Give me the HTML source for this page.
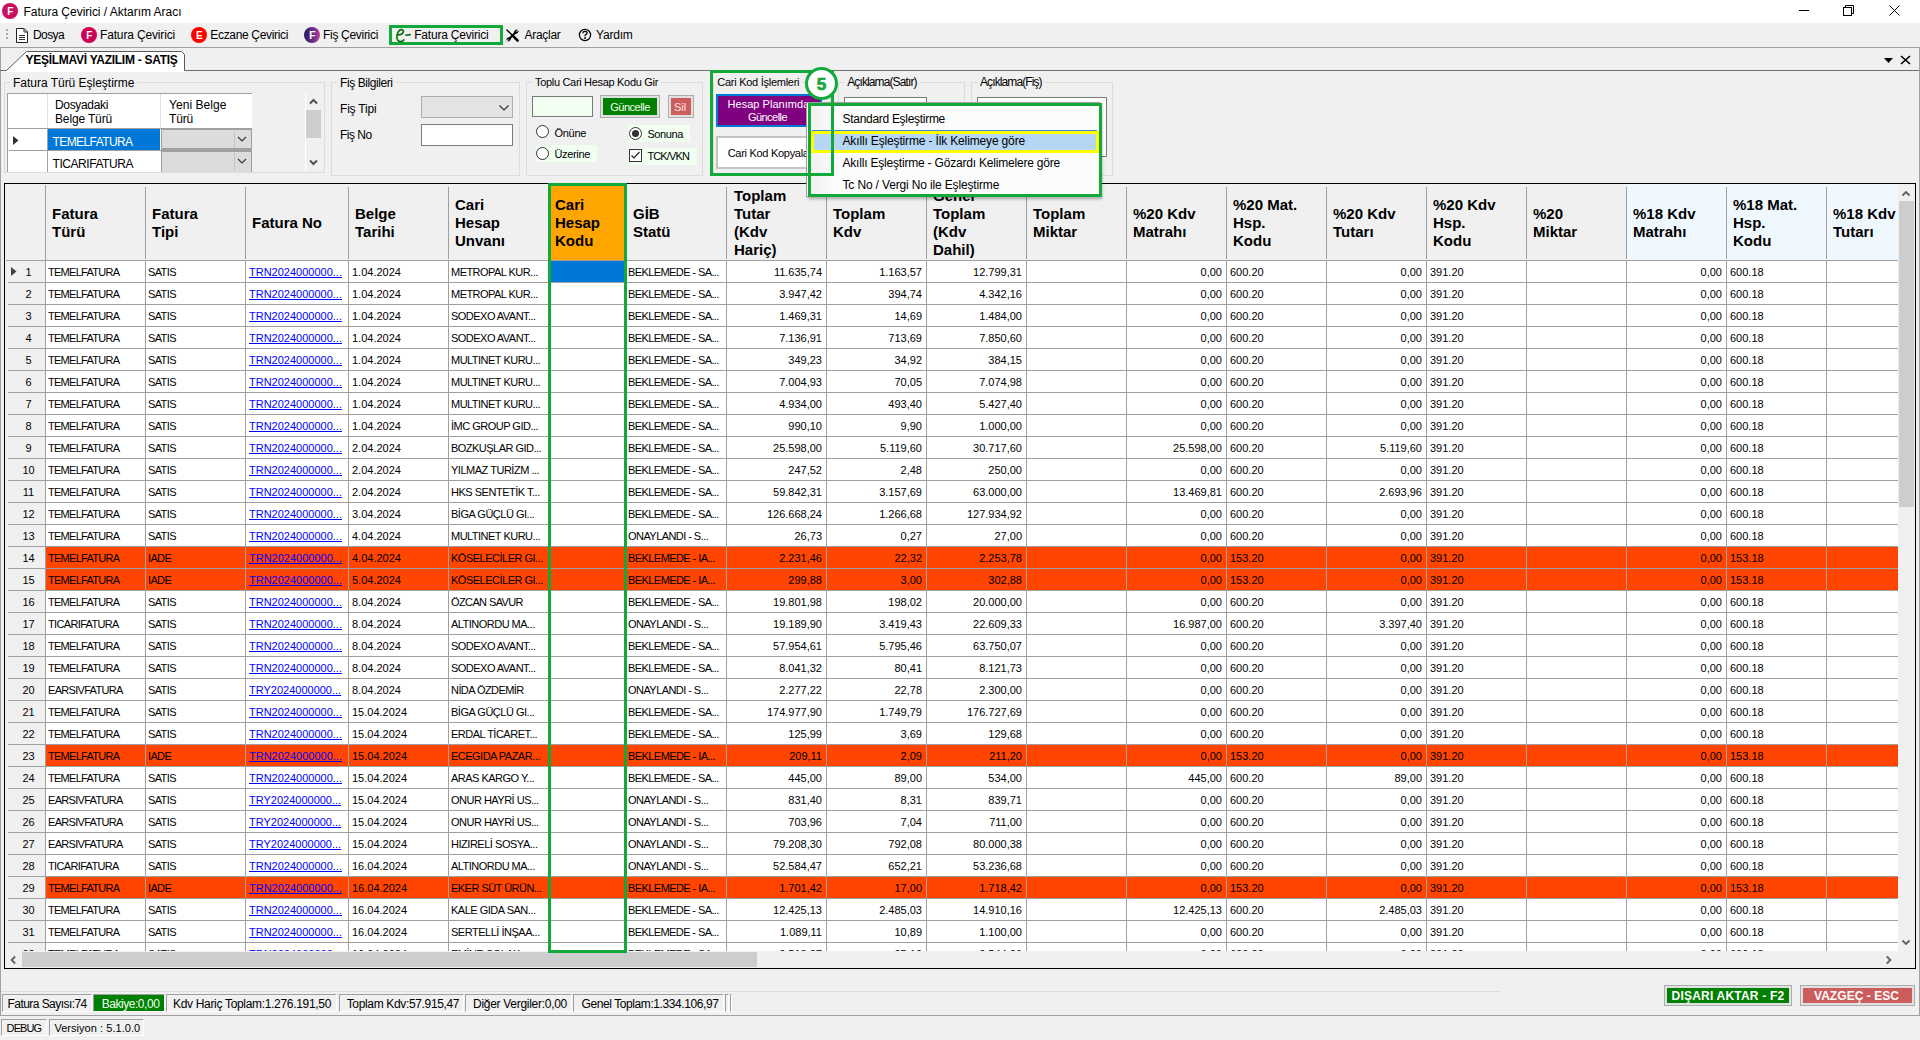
<!DOCTYPE html>
<html><head><meta charset="utf-8"><style>
html,body{margin:0;padding:0;}
body{width:1920px;height:1040px;position:relative;overflow:hidden;background:#f0f0f0;font-family:"Liberation Sans", sans-serif;}
.t{position:absolute;white-space:pre;font-family:"Liberation Sans", sans-serif;}
</style></head><body>
<div style="position:absolute;left:0px;top:0px;width:1920px;height:23px;background:#fff"></div>
<div style="position:absolute;left:2px;top:3px;width:16px;height:16px;border-radius:50%;box-sizing:border-box;background:#cc0f5f"></div>
<span class="t" style="left:7.15px;top:6.53px;font-size:10px;line-height:10px;color:#fff;font-weight:700;">F</span>
<span class="t" style="left:23.50px;top:5.84px;font-size:12px;line-height:12px;color:#000;letter-spacing:-0.023px;">Fatura Çevirici / Aktarım Aracı</span>
<div style="position:absolute;left:1799px;top:10px;width:10px;height:1px;background:#000"></div>
<svg style="position:absolute;left:1843px;top:5px;" width="12" height="12" viewBox="0 0 12 12"><rect x="0.5" y="2.5" width="8" height="8" fill="none" stroke="#000"/><path d="M2.5 2.5V0.5H10.5V8.5H8.5" fill="none" stroke="#000"/></svg>
<svg style="position:absolute;left:1889px;top:5px;" width="12" height="12" viewBox="0 0 12 12"><path d="M0.5 0.5L10.5 10.5M10.5 0.5L0.5 10.5" stroke="#000" stroke-width="1"/></svg>
<div style="position:absolute;left:0px;top:23px;width:1920px;height:24px;background:#f0f0f0"></div>
<div style="position:absolute;left:6px;top:29px;width:2px;height:2px;background:#a9a9a9"></div>
<div style="position:absolute;left:6px;top:33px;width:2px;height:2px;background:#a9a9a9"></div>
<div style="position:absolute;left:6px;top:37px;width:2px;height:2px;background:#a9a9a9"></div>
<svg style="position:absolute;left:15px;top:27px;" width="14" height="17" viewBox="0 0 14 17"><path d="M1.5 1.5H9L12.5 5V15.5H1.5Z" fill="#fff" stroke="#222" stroke-width="1" stroke-linejoin="round"/><path d="M9 1.5V5H12.5" fill="none" stroke="#222"/><path d="M4 8.5H10M4 10.5H10M4 12.5H10" stroke="#333"/></svg>
<span class="t" style="left:33.00px;top:28.84px;font-size:12px;line-height:12px;color:#000;letter-spacing:-0.603px;">Dosya</span>
<div style="position:absolute;left:81px;top:27px;width:16px;height:16px;border-radius:50%;box-sizing:border-box;background:#cc0055"></div>
<span class="t" style="left:86.25px;top:30.53px;font-size:10px;line-height:10px;color:#fff;font-weight:700;">F</span>
<span class="t" style="left:100.00px;top:28.84px;font-size:12px;line-height:12px;color:#000;letter-spacing:-0.157px;">Fatura Çevirici</span>
<div style="position:absolute;left:191px;top:27px;width:16px;height:16px;border-radius:50%;box-sizing:border-box;background:#ff0000"></div>
<span class="t" style="left:195.96px;top:31.03px;font-size:10px;line-height:10px;color:#fff;font-weight:700;">E</span>
<span class="t" style="left:210.30px;top:28.84px;font-size:12px;line-height:12px;color:#000;letter-spacing:-0.334px;">Eczane Çevirici</span>
<div style="position:absolute;left:304px;top:27px;width:16px;height:16px;border-radius:50%;box-sizing:border-box;background:linear-gradient(90deg,#22195e,#6a2f86 55%,#b8409c)"></div>
<span class="t" style="left:309.25px;top:30.53px;font-size:10px;line-height:10px;color:#fff;font-weight:700;">F</span>
<span class="t" style="left:323.00px;top:28.84px;font-size:12px;line-height:12px;color:#000;letter-spacing:-0.306px;">Fiş Çevirici</span>
<div style="position:absolute;left:389px;top:25px;width:114px;height:20px;border:3px solid #12a83a;box-sizing:border-box"></div>
<svg style="position:absolute;left:394px;top:28px;" width="18" height="16" viewBox="0 0 18 16"><path d="M4.3 6.8C6.5 6.8 9.6 5.6 9.4 3.3C9.2 1.3 6.6 1.2 5 2.8C2.8 5 2.3 9.5 3.6 11.8C5 14.2 8.2 14 9.8 12" fill="none" stroke="#0b6a12" stroke-width="1.7" stroke-linecap="round"/><path d="M3.2 6.5C2.6 9 2.8 11 3.8 12.5" fill="none" stroke="#10a010" stroke-width="1.2"/><path d="M11.3 7.2L16.8 6.6" stroke="#0b6a12" stroke-width="1.6"/></svg>
<span class="t" style="left:414.20px;top:28.84px;font-size:12px;line-height:12px;color:#000;letter-spacing:-0.197px;">Fatura Çevirici</span>
<svg style="position:absolute;left:506px;top:29px;" width="13" height="13" viewBox="0 0 13 13"><path d="M0.9 0.9L6.3 6.3" stroke="#000" stroke-width="1.4" stroke-linecap="round"/><path d="M7.2 7.2L11.6 11.6" stroke="#000" stroke-width="2.6" stroke-linecap="round"/><path d="M3 10L10 3" stroke="#000" stroke-width="2"/><path d="M8.3 4.6C7.6 2.2 9.4 0.2 11.8 0.5L10.2 2.2L10.9 2.9L12.6 1.3C13 3.6 11 5.5 8.3 4.6Z" fill="#000"/><path d="M4.7 8.4C5.4 10.8 3.6 12.8 1.2 12.5L2.8 10.8L2.1 10.1L0.4 11.7C0 9.4 2 7.5 4.7 8.4Z" fill="#000"/></svg>
<span class="t" style="left:524.50px;top:28.84px;font-size:12px;line-height:12px;color:#000;letter-spacing:-0.288px;">Araçlar</span>
<svg style="position:absolute;left:578px;top:28px;" width="14" height="14" viewBox="0 0 14 14"><circle cx="7" cy="7" r="5.6" fill="none" stroke="#000" stroke-width="1.2"/><path d="M4.9 5.2C4.9 3.9 5.8 3.3 7 3.3C8.2 3.3 9.1 4 9.1 5C9.1 6.2 7.4 6.5 7 7.6L7 8.3" fill="none" stroke="#000" stroke-width="1.3"/><circle cx="7" cy="10" r="0.9" fill="#000"/></svg>
<span class="t" style="left:596.00px;top:28.84px;font-size:12px;line-height:12px;color:#000;letter-spacing:-0.199px;">Yardım</span>
<div style="position:absolute;left:0px;top:47px;width:1920px;height:1px;background:#a0a0a0"></div>
<div style="position:absolute;left:0px;top:47px;width:1px;height:969px;background:#a0a0a0"></div>
<div style="position:absolute;left:1919px;top:47px;width:1px;height:969px;background:#a0a0a0"></div>
<div style="position:absolute;left:0px;top:1015px;width:1920px;height:1px;background:#a0a0a0"></div>
<div style="position:absolute;left:0px;top:70px;width:7px;height:1px;background:#6e6e6e"></div>
<div style="position:absolute;left:184px;top:70px;width:1735px;height:1px;background:#6e6e6e"></div>
<svg style="position:absolute;left:0px;top:48px;" width="190" height="24" viewBox="0 0 190 24"><path d="M6.5 22.5L26.5 3.5H181.5L184.5 6.5V22.5" fill="#fff" stroke="#5a5a5a" stroke-width="1"/><rect x="7" y="22" width="177" height="2" fill="#fff"/></svg>
<span class="t" style="left:25.50px;top:53.84px;font-size:12px;line-height:12px;color:#000;font-weight:700;letter-spacing:-0.276px;">YEŞİLMAVİ YAZILIM - SATIŞ</span>
<svg style="position:absolute;left:1884px;top:58px;" width="10" height="6" viewBox="0 0 10 6"><path d="M0 0H9L4.5 5Z" fill="#000"/></svg>
<svg style="position:absolute;left:1900px;top:55px;" width="11" height="10" viewBox="0 0 11 10"><path d="M1 1L10 9M10 1L1 9" stroke="#000" stroke-width="1.6"/></svg>
<div style="position:absolute;left:4px;top:82px;width:321px;height:91px;border:1px solid #dcdcdc;box-sizing:border-box"></div>
<div style="position:absolute;left:10px;top:80px;width:127.4px;height:5px;background:#f0f0f0"></div>
<span class="t" style="left:13.00px;top:76.84px;font-size:12px;line-height:12px;color:#000;letter-spacing:-0.019px;">Fatura Türü Eşleştirme</span>
<div style="position:absolute;left:331px;top:82px;width:189px;height:94px;border:1px solid #dcdcdc;box-sizing:border-box"></div>
<div style="position:absolute;left:337px;top:80px;width:58.5px;height:5px;background:#f0f0f0"></div>
<span class="t" style="left:340.00px;top:76.84px;font-size:12px;line-height:12px;color:#000;letter-spacing:-0.424px;">Fiş Bilgileri</span>
<div style="position:absolute;left:526px;top:82px;width:177px;height:94px;border:1px solid #dcdcdc;box-sizing:border-box"></div>
<div style="position:absolute;left:532px;top:80px;width:129px;height:5px;background:#f0f0f0"></div>
<span class="t" style="left:535.00px;top:76.69px;font-size:11px;line-height:11px;color:#000;letter-spacing:-0.314px;">Toplu Cari Hesap Kodu Gir</span>
<div style="position:absolute;left:713px;top:82px;width:118px;height:94px;border:1px solid #dcdcdc;box-sizing:border-box"></div>
<div style="position:absolute;left:714.3px;top:80px;width:88px;height:5px;background:#f0f0f0"></div>
<span class="t" style="left:717.30px;top:76.69px;font-size:11px;line-height:11px;color:#000;letter-spacing:-0.267px;">Cari Kod İşlemleri</span>
<div style="position:absolute;left:838px;top:82px;width:127px;height:94px;border:1px solid #dcdcdc;box-sizing:border-box"></div>
<div style="position:absolute;left:844.2px;top:80px;width:75.5px;height:5px;background:#f0f0f0"></div>
<span class="t" style="left:847.20px;top:75.84px;font-size:12px;line-height:12px;color:#000;letter-spacing:-0.879px;">Açıklama(Satır)</span>
<div style="position:absolute;left:971px;top:82px;width:142px;height:94px;border:1px solid #dcdcdc;box-sizing:border-box"></div>
<div style="position:absolute;left:977px;top:80px;width:67.7px;height:5px;background:#f0f0f0"></div>
<span class="t" style="left:980.00px;top:75.84px;font-size:12px;line-height:12px;color:#000;letter-spacing:-0.896px;">Açıklama(Fiş)</span>
<div style="position:absolute;left:7px;top:93px;width:245px;height:79px;background:#fff"></div>
<div style="position:absolute;left:7px;top:93px;width:245px;height:1px;background:#a0a0a0"></div>
<div style="position:absolute;left:7px;top:93px;width:1px;height:79px;background:#a0a0a0"></div>
<div style="position:absolute;left:47px;top:94px;width:1px;height:34px;background:#e3e3e3"></div>
<div style="position:absolute;left:160px;top:94px;width:1px;height:34px;background:#e3e3e3"></div>
<div style="position:absolute;left:8px;top:128px;width:244px;height:1px;background:#a0a0a0"></div>
<span class="t" style="left:55.00px;top:98.84px;font-size:12px;line-height:12px;color:#000;letter-spacing:-0.337px;">Dosyadaki</span>
<span class="t" style="left:55.00px;top:112.84px;font-size:12px;line-height:12px;color:#000;letter-spacing:-0.148px;">Belge Türü</span>
<span class="t" style="left:169.00px;top:98.84px;font-size:12px;line-height:12px;color:#000;letter-spacing:0.055px;">Yeni Belge</span>
<span class="t" style="left:169.00px;top:112.84px;font-size:12px;line-height:12px;color:#000;letter-spacing:-0.172px;">Türü</span>
<div style="position:absolute;left:47px;top:129px;width:1px;height:43px;background:#a0a0a0"></div>
<svg style="position:absolute;left:13px;top:136px;" width="6" height="9" viewBox="0 0 6 9"><path d="M0 0L5.5 4.5L0 9Z" fill="#333"/></svg>
<div style="position:absolute;left:48px;top:129px;width:112px;height:21px;background:#0078d7"></div>
<span class="t" style="left:52.50px;top:135.84px;font-size:12px;line-height:12px;color:#fff;letter-spacing:-0.588px;">TEMELFATURA</span>
<span class="t" style="left:52.50px;top:157.84px;font-size:12px;line-height:12px;color:#000;letter-spacing:-0.440px;">TICARIFATURA</span>
<div style="position:absolute;left:9px;top:150px;width:243px;height:1px;background:#a0a0a0"></div>
<div style="position:absolute;left:161px;top:128px;width:91px;height:22px;background:#dcdcdc;border:1px solid #a0a0a0;border-top:2px solid #a0a0a0;border-bottom:2px solid #a0a0a0;box-sizing:border-box"></div>
<div style="position:absolute;left:234px;top:131px;width:1px;height:17px;background:#c4c4c4"></div>
<svg style="position:absolute;left:237px;top:136px;" width="10" height="7" viewBox="0 0 10 7"><path d="M1 1L5 5L9 1" fill="none" stroke="#333" stroke-width="1.1"/></svg>
<div style="position:absolute;left:161px;top:150px;width:91px;height:23px;background:#dcdcdc;border:1px solid #a0a0a0;border-top:2px solid #a0a0a0;border-bottom:none;box-sizing:border-box"></div>
<div style="position:absolute;left:234px;top:153px;width:1px;height:17px;background:#c4c4c4"></div>
<svg style="position:absolute;left:237px;top:158px;" width="10" height="7" viewBox="0 0 10 7"><path d="M1 1L5 5L9 1" fill="none" stroke="#333" stroke-width="1.1"/></svg>
<div style="position:absolute;left:305px;top:93px;width:1px;height:79px;background:#fff"></div>
<svg style="position:absolute;left:309px;top:98px;" width="9" height="7" viewBox="0 0 9 7"><path d="M1 5.5L4.5 2L8 5.5" fill="none" stroke="#505050" stroke-width="2"/></svg>
<div style="position:absolute;left:306px;top:110px;width:15px;height:28px;background:#cdcdcd"></div>
<svg style="position:absolute;left:309px;top:159px;" width="9" height="7" viewBox="0 0 9 7"><path d="M1 1.5L4.5 5L8 1.5" fill="none" stroke="#505050" stroke-width="2"/></svg>
<div style="position:absolute;left:4px;top:172px;width:321px;height:1px;background:#dcdcdc"></div>
<span class="t" style="left:340.00px;top:103.34px;font-size:12px;line-height:12px;color:#000;letter-spacing:-0.189px;">Fiş Tipi</span>
<span class="t" style="left:340.00px;top:128.84px;font-size:12px;line-height:12px;color:#000;letter-spacing:-0.512px;">Fiş No</span>
<div style="position:absolute;left:421px;top:96px;width:92px;height:22px;background:#e3e3e3;border:1px solid #adadad;box-sizing:border-box"></div>
<svg style="position:absolute;left:498px;top:104px;" width="12" height="8" viewBox="0 0 12 8"><path d="M1.5 1.5L6 6L10.5 1.5" fill="none" stroke="#333" stroke-width="1.2"/></svg>
<div style="position:absolute;left:421px;top:124px;width:92px;height:22px;background:#fff;border:1px solid #7a7a7a;box-sizing:border-box"></div>
<div style="position:absolute;left:532px;top:96px;width:61px;height:21px;background:#f0fff0;border:1px solid #7a7a7a;box-sizing:border-box"></div>
<div style="position:absolute;left:600px;top:95px;width:60px;height:23px;background:#e1e1e1;border:1px solid #adadad;box-sizing:border-box"></div>
<div style="position:absolute;left:603px;top:98px;width:54px;height:17px;background:#008000"></div>
<span class="t" style="left:610.20px;top:101.69px;font-size:11px;line-height:11px;color:#f0fff0;letter-spacing:-0.478px;">Güncelle</span>
<div style="position:absolute;left:668px;top:95px;width:26px;height:23px;background:#e1e1e1;border:1px solid #adadad;box-sizing:border-box"></div>
<div style="position:absolute;left:671px;top:98px;width:20px;height:17px;background:#cd5c5c"></div>
<span class="t" style="left:673.88px;top:101.69px;font-size:11px;line-height:11px;color:#ffe4e1;">Sil</span>
<div style="position:absolute;left:536px;top:145px;width:61px;height:17px;background:#f0fff0"></div>
<div style="position:absolute;left:629px;top:125px;width:61px;height:17px;background:#f0fff0"></div>
<div style="position:absolute;left:629px;top:148px;width:68px;height:17px;background:#f0fff0"></div>
<div style="position:absolute;left:536.0px;top:125.0px;width:13.0px;height:13.0px;border-radius:50%;box-sizing:border-box;border:1px solid #333;background:#fff"></div>
<div style="position:absolute;left:536.0px;top:147.0px;width:13.0px;height:13.0px;border-radius:50%;box-sizing:border-box;border:1px solid #333;background:#fff"></div>
<div style="position:absolute;left:629.0px;top:127.0px;width:13.0px;height:13.0px;border-radius:50%;box-sizing:border-box;border:1px solid #333;background:#fff"></div>
<div style="position:absolute;left:632.0px;top:130.0px;width:7.0px;height:7.0px;border-radius:50%;box-sizing:border-box;background:#333"></div>
<span class="t" style="left:554.40px;top:127.69px;font-size:11px;line-height:11px;color:#000;letter-spacing:-0.266px;">Önüne</span>
<span class="t" style="left:554.40px;top:148.69px;font-size:11px;line-height:11px;color:#000;letter-spacing:-0.329px;">Üzerine</span>
<span class="t" style="left:647.40px;top:128.69px;font-size:11px;line-height:11px;color:#000;letter-spacing:-0.406px;">Sonuna</span>
<div style="position:absolute;left:629px;top:149px;width:13px;height:13px;background:#fff;border:1px solid #333;box-sizing:border-box"></div>
<svg style="position:absolute;left:629px;top:149px;" width="13" height="13" viewBox="0 0 13 13"><path d="M2.5 6.5L5 9L10.5 3" fill="none" stroke="#222" stroke-width="1.2"/></svg>
<span class="t" style="left:647.40px;top:150.69px;font-size:11px;line-height:11px;color:#000;letter-spacing:-0.841px;">TCK/VKN</span>
<div style="position:absolute;left:716px;top:94px;width:106px;height:33px;background:#800080;border:2px solid #0078d7;box-sizing:border-box"></div>
<span class="t" style="left:727.50px;top:98.69px;font-size:11px;line-height:11px;color:#fff;letter-spacing:0.036px;">Hesap Planımdan</span>
<span class="t" style="left:747.90px;top:111.69px;font-size:11px;line-height:11px;color:#fff;letter-spacing:-0.528px;">Güncelle</span>
<div style="position:absolute;left:716px;top:136px;width:106px;height:33px;background:#fff;border:2px solid #c4c4c4;box-sizing:border-box"></div>
<span class="t" style="left:727.70px;top:147.69px;font-size:11px;line-height:11px;color:#000;letter-spacing:-0.288px;">Cari Kod Kopyala</span>
<div style="position:absolute;left:844px;top:97px;width:83px;height:60px;background:#fff;border:1px solid #7a7a7a;box-sizing:border-box"></div>
<div style="position:absolute;left:977px;top:97px;width:130px;height:60px;background:#fff;border:1px solid #7a7a7a;box-sizing:border-box"></div>
<div style="position:absolute;left:4px;top:183px;width:1912px;height:786px;border:1px solid #000;box-sizing:border-box;background:#fff"></div>
<div style="position:absolute;left:0;top:0;width:1920px;height:1040px;clip-path:inset(184px 22px 89px 5px)">
<div style="position:absolute;left:5px;top:184px;width:1893px;height:76px;background:#f0f0f0"></div>
<div style="position:absolute;left:549px;top:184px;width:77px;height:76px;background:#ffa500"></div>
<div style="position:absolute;left:1627px;top:184px;width:271px;height:76px;background:#f0f8ff"></div>
<div style="position:absolute;left:45px;top:185px;width:1px;height:767px;background:#a0a0a0"></div>
<div style="position:absolute;left:145px;top:187px;width:1px;height:72px;background:#a0a0a0"></div>
<div style="position:absolute;left:245px;top:187px;width:1px;height:72px;background:#a0a0a0"></div>
<div style="position:absolute;left:348px;top:187px;width:1px;height:72px;background:#a0a0a0"></div>
<div style="position:absolute;left:448px;top:187px;width:1px;height:72px;background:#a0a0a0"></div>
<div style="position:absolute;left:548px;top:187px;width:1px;height:72px;background:#a0a0a0"></div>
<div style="position:absolute;left:625px;top:187px;width:1px;height:72px;background:#a0a0a0"></div>
<div style="position:absolute;left:726px;top:187px;width:1px;height:72px;background:#a0a0a0"></div>
<div style="position:absolute;left:826px;top:187px;width:1px;height:72px;background:#a0a0a0"></div>
<div style="position:absolute;left:926px;top:187px;width:1px;height:72px;background:#a0a0a0"></div>
<div style="position:absolute;left:1026px;top:187px;width:1px;height:72px;background:#a0a0a0"></div>
<div style="position:absolute;left:1126px;top:187px;width:1px;height:72px;background:#a0a0a0"></div>
<div style="position:absolute;left:1226px;top:187px;width:1px;height:72px;background:#a0a0a0"></div>
<div style="position:absolute;left:1326px;top:187px;width:1px;height:72px;background:#a0a0a0"></div>
<div style="position:absolute;left:1426px;top:187px;width:1px;height:72px;background:#a0a0a0"></div>
<div style="position:absolute;left:1526px;top:187px;width:1px;height:72px;background:#a0a0a0"></div>
<div style="position:absolute;left:1626px;top:187px;width:1px;height:72px;background:#a0a0a0"></div>
<div style="position:absolute;left:1726px;top:187px;width:1px;height:72px;background:#a0a0a0"></div>
<div style="position:absolute;left:1826px;top:187px;width:1px;height:72px;background:#a0a0a0"></div>
<div style="position:absolute;left:1926px;top:187px;width:1px;height:72px;background:#a0a0a0"></div>
<div style="position:absolute;left:6px;top:260px;width:1892px;height:1px;background:#a0a0a0"></div>
<div style="position:absolute;left:5px;top:261px;width:40px;height:700px;background:#f0f0f0"></div>
<span class="t" style="left:52.00px;top:206.30px;font-size:15px;line-height:15px;color:#000;font-weight:700;">Fatura</span>
<span class="t" style="left:52.00px;top:224.30px;font-size:15px;line-height:15px;color:#000;font-weight:700;">Türü</span>
<span class="t" style="left:152.00px;top:206.30px;font-size:15px;line-height:15px;color:#000;font-weight:700;">Fatura</span>
<span class="t" style="left:152.00px;top:224.30px;font-size:15px;line-height:15px;color:#000;font-weight:700;">Tipi</span>
<span class="t" style="left:252.00px;top:215.30px;font-size:15px;line-height:15px;color:#000;font-weight:700;">Fatura No</span>
<span class="t" style="left:355.00px;top:206.30px;font-size:15px;line-height:15px;color:#000;font-weight:700;">Belge</span>
<span class="t" style="left:355.00px;top:224.30px;font-size:15px;line-height:15px;color:#000;font-weight:700;">Tarihi</span>
<span class="t" style="left:455.00px;top:197.30px;font-size:15px;line-height:15px;color:#000;font-weight:700;">Cari</span>
<span class="t" style="left:455.00px;top:215.30px;font-size:15px;line-height:15px;color:#000;font-weight:700;">Hesap</span>
<span class="t" style="left:455.00px;top:233.30px;font-size:15px;line-height:15px;color:#000;font-weight:700;">Unvanı</span>
<span class="t" style="left:555.00px;top:197.30px;font-size:15px;line-height:15px;color:#000;font-weight:700;">Cari</span>
<span class="t" style="left:555.00px;top:215.30px;font-size:15px;line-height:15px;color:#000;font-weight:700;">Hesap</span>
<span class="t" style="left:555.00px;top:233.30px;font-size:15px;line-height:15px;color:#000;font-weight:700;">Kodu</span>
<span class="t" style="left:633.00px;top:206.30px;font-size:15px;line-height:15px;color:#000;font-weight:700;">GİB</span>
<span class="t" style="left:633.00px;top:224.30px;font-size:15px;line-height:15px;color:#000;font-weight:700;">Statü</span>
<span class="t" style="left:734.00px;top:188.30px;font-size:15px;line-height:15px;color:#000;font-weight:700;">Toplam</span>
<span class="t" style="left:734.00px;top:206.30px;font-size:15px;line-height:15px;color:#000;font-weight:700;">Tutar</span>
<span class="t" style="left:734.00px;top:224.30px;font-size:15px;line-height:15px;color:#000;font-weight:700;">(Kdv</span>
<span class="t" style="left:734.00px;top:242.30px;font-size:15px;line-height:15px;color:#000;font-weight:700;">Hariç)</span>
<span class="t" style="left:833.00px;top:206.30px;font-size:15px;line-height:15px;color:#000;font-weight:700;">Toplam</span>
<span class="t" style="left:833.00px;top:224.30px;font-size:15px;line-height:15px;color:#000;font-weight:700;">Kdv</span>
<span class="t" style="left:933.00px;top:188.30px;font-size:15px;line-height:15px;color:#000;font-weight:700;">Genel</span>
<span class="t" style="left:933.00px;top:206.30px;font-size:15px;line-height:15px;color:#000;font-weight:700;">Toplam</span>
<span class="t" style="left:933.00px;top:224.30px;font-size:15px;line-height:15px;color:#000;font-weight:700;">(Kdv</span>
<span class="t" style="left:933.00px;top:242.30px;font-size:15px;line-height:15px;color:#000;font-weight:700;">Dahil)</span>
<span class="t" style="left:1033.00px;top:206.30px;font-size:15px;line-height:15px;color:#000;font-weight:700;">Toplam</span>
<span class="t" style="left:1033.00px;top:224.30px;font-size:15px;line-height:15px;color:#000;font-weight:700;">Miktar</span>
<span class="t" style="left:1133.00px;top:206.30px;font-size:15px;line-height:15px;color:#000;font-weight:700;">%20 Kdv</span>
<span class="t" style="left:1133.00px;top:224.30px;font-size:15px;line-height:15px;color:#000;font-weight:700;">Matrahı</span>
<span class="t" style="left:1233.00px;top:197.30px;font-size:15px;line-height:15px;color:#000;font-weight:700;">%20 Mat.</span>
<span class="t" style="left:1233.00px;top:215.30px;font-size:15px;line-height:15px;color:#000;font-weight:700;">Hsp.</span>
<span class="t" style="left:1233.00px;top:233.30px;font-size:15px;line-height:15px;color:#000;font-weight:700;">Kodu</span>
<span class="t" style="left:1333.00px;top:206.30px;font-size:15px;line-height:15px;color:#000;font-weight:700;">%20 Kdv</span>
<span class="t" style="left:1333.00px;top:224.30px;font-size:15px;line-height:15px;color:#000;font-weight:700;">Tutarı</span>
<span class="t" style="left:1433.00px;top:197.30px;font-size:15px;line-height:15px;color:#000;font-weight:700;">%20 Kdv</span>
<span class="t" style="left:1433.00px;top:215.30px;font-size:15px;line-height:15px;color:#000;font-weight:700;">Hsp.</span>
<span class="t" style="left:1433.00px;top:233.30px;font-size:15px;line-height:15px;color:#000;font-weight:700;">Kodu</span>
<span class="t" style="left:1533.00px;top:206.30px;font-size:15px;line-height:15px;color:#000;font-weight:700;">%20</span>
<span class="t" style="left:1533.00px;top:224.30px;font-size:15px;line-height:15px;color:#000;font-weight:700;">Miktar</span>
<span class="t" style="left:1633.00px;top:206.30px;font-size:15px;line-height:15px;color:#000;font-weight:700;">%18 Kdv</span>
<span class="t" style="left:1633.00px;top:224.30px;font-size:15px;line-height:15px;color:#000;font-weight:700;">Matrahı</span>
<span class="t" style="left:1733.00px;top:197.30px;font-size:15px;line-height:15px;color:#000;font-weight:700;">%18 Mat.</span>
<span class="t" style="left:1733.00px;top:215.30px;font-size:15px;line-height:15px;color:#000;font-weight:700;">Hsp.</span>
<span class="t" style="left:1733.00px;top:233.30px;font-size:15px;line-height:15px;color:#000;font-weight:700;">Kodu</span>
<span class="t" style="left:1833.00px;top:206.30px;font-size:15px;line-height:15px;color:#000;font-weight:700;">%18 Kdv</span>
<span class="t" style="left:1833.00px;top:224.30px;font-size:15px;line-height:15px;color:#000;font-weight:700;">Tutarı</span>
<div style="position:absolute;left:549px;top:261px;width:76px;height:21px;background:#0078d7"></div>
<div style="position:absolute;left:46px;top:282px;width:1852px;height:1px;background:#a0a0a0"></div>
<div style="position:absolute;left:8px;top:282px;width:37px;height:1px;background:#a0a0a0"></div>
<span class="t" style="left:25.44px;top:266.69px;font-size:11px;line-height:11px;color:#000;">1</span>
<span class="t" style="left:48.00px;top:266.69px;font-size:11px;line-height:11px;color:#000;letter-spacing:-0.721px;">TEMELFATURA</span>
<span class="t" style="left:148.00px;top:266.69px;font-size:11px;line-height:11px;color:#000;letter-spacing:-0.620px;">SATIS</span>
<span class="t" style="left:249.00px;top:266.69px;font-size:11px;line-height:11px;color:#0000ff;text-decoration:underline;">TRN2024000000...</span>
<span class="t" style="left:352.00px;top:266.69px;font-size:11px;line-height:11px;color:#000;">1.04.2024</span>
<span class="t" style="left:451.00px;top:266.69px;font-size:11px;line-height:11px;color:#000;letter-spacing:-0.537px;">METROPAL KUR...</span>
<span class="t" style="left:628.00px;top:266.69px;font-size:11px;line-height:11px;color:#000;letter-spacing:-0.593px;">BEKLEMEDE - SA...</span>
<span class="t" style="left:773.88px;top:266.69px;font-size:11px;line-height:11px;color:#000;">11.635,74</span>
<span class="t" style="left:879.17px;top:266.69px;font-size:11px;line-height:11px;color:#000;">1.163,57</span>
<span class="t" style="left:973.06px;top:266.69px;font-size:11px;line-height:11px;color:#000;">12.799,31</span>
<span class="t" style="left:1200.58px;top:266.69px;font-size:11px;line-height:11px;color:#000;">0,00</span>
<span class="t" style="left:1230.00px;top:266.69px;font-size:11px;line-height:11px;color:#000;">600.20</span>
<span class="t" style="left:1400.58px;top:266.69px;font-size:11px;line-height:11px;color:#000;">0,00</span>
<span class="t" style="left:1430.00px;top:266.69px;font-size:11px;line-height:11px;color:#000;">391.20</span>
<span class="t" style="left:1700.58px;top:266.69px;font-size:11px;line-height:11px;color:#000;">0,00</span>
<span class="t" style="left:1730.00px;top:266.69px;font-size:11px;line-height:11px;color:#000;">600.18</span>
<div style="position:absolute;left:46px;top:304px;width:1852px;height:1px;background:#a0a0a0"></div>
<div style="position:absolute;left:8px;top:304px;width:37px;height:1px;background:#a0a0a0"></div>
<span class="t" style="left:25.44px;top:288.69px;font-size:11px;line-height:11px;color:#000;">2</span>
<span class="t" style="left:48.00px;top:288.69px;font-size:11px;line-height:11px;color:#000;letter-spacing:-0.721px;">TEMELFATURA</span>
<span class="t" style="left:148.00px;top:288.69px;font-size:11px;line-height:11px;color:#000;letter-spacing:-0.620px;">SATIS</span>
<span class="t" style="left:249.00px;top:288.69px;font-size:11px;line-height:11px;color:#0000ff;text-decoration:underline;">TRN2024000000...</span>
<span class="t" style="left:352.00px;top:288.69px;font-size:11px;line-height:11px;color:#000;">1.04.2024</span>
<span class="t" style="left:451.00px;top:288.69px;font-size:11px;line-height:11px;color:#000;letter-spacing:-0.537px;">METROPAL KUR...</span>
<span class="t" style="left:628.00px;top:288.69px;font-size:11px;line-height:11px;color:#000;letter-spacing:-0.593px;">BEKLEMEDE - SA...</span>
<span class="t" style="left:779.17px;top:288.69px;font-size:11px;line-height:11px;color:#000;">3.947,42</span>
<span class="t" style="left:888.34px;top:288.69px;font-size:11px;line-height:11px;color:#000;">394,74</span>
<span class="t" style="left:979.17px;top:288.69px;font-size:11px;line-height:11px;color:#000;">4.342,16</span>
<span class="t" style="left:1200.58px;top:288.69px;font-size:11px;line-height:11px;color:#000;">0,00</span>
<span class="t" style="left:1230.00px;top:288.69px;font-size:11px;line-height:11px;color:#000;">600.20</span>
<span class="t" style="left:1400.58px;top:288.69px;font-size:11px;line-height:11px;color:#000;">0,00</span>
<span class="t" style="left:1430.00px;top:288.69px;font-size:11px;line-height:11px;color:#000;">391.20</span>
<span class="t" style="left:1700.58px;top:288.69px;font-size:11px;line-height:11px;color:#000;">0,00</span>
<span class="t" style="left:1730.00px;top:288.69px;font-size:11px;line-height:11px;color:#000;">600.18</span>
<div style="position:absolute;left:46px;top:326px;width:1852px;height:1px;background:#a0a0a0"></div>
<div style="position:absolute;left:8px;top:326px;width:37px;height:1px;background:#a0a0a0"></div>
<span class="t" style="left:25.44px;top:310.69px;font-size:11px;line-height:11px;color:#000;">3</span>
<span class="t" style="left:48.00px;top:310.69px;font-size:11px;line-height:11px;color:#000;letter-spacing:-0.721px;">TEMELFATURA</span>
<span class="t" style="left:148.00px;top:310.69px;font-size:11px;line-height:11px;color:#000;letter-spacing:-0.620px;">SATIS</span>
<span class="t" style="left:249.00px;top:310.69px;font-size:11px;line-height:11px;color:#0000ff;text-decoration:underline;">TRN2024000000...</span>
<span class="t" style="left:352.00px;top:310.69px;font-size:11px;line-height:11px;color:#000;">1.04.2024</span>
<span class="t" style="left:451.00px;top:310.69px;font-size:11px;line-height:11px;color:#000;letter-spacing:-0.524px;">SODEXO AVANT...</span>
<span class="t" style="left:628.00px;top:310.69px;font-size:11px;line-height:11px;color:#000;letter-spacing:-0.593px;">BEKLEMEDE - SA...</span>
<span class="t" style="left:779.17px;top:310.69px;font-size:11px;line-height:11px;color:#000;">1.469,31</span>
<span class="t" style="left:894.47px;top:310.69px;font-size:11px;line-height:11px;color:#000;">14,69</span>
<span class="t" style="left:979.17px;top:310.69px;font-size:11px;line-height:11px;color:#000;">1.484,00</span>
<span class="t" style="left:1200.58px;top:310.69px;font-size:11px;line-height:11px;color:#000;">0,00</span>
<span class="t" style="left:1230.00px;top:310.69px;font-size:11px;line-height:11px;color:#000;">600.20</span>
<span class="t" style="left:1400.58px;top:310.69px;font-size:11px;line-height:11px;color:#000;">0,00</span>
<span class="t" style="left:1430.00px;top:310.69px;font-size:11px;line-height:11px;color:#000;">391.20</span>
<span class="t" style="left:1700.58px;top:310.69px;font-size:11px;line-height:11px;color:#000;">0,00</span>
<span class="t" style="left:1730.00px;top:310.69px;font-size:11px;line-height:11px;color:#000;">600.18</span>
<div style="position:absolute;left:46px;top:348px;width:1852px;height:1px;background:#a0a0a0"></div>
<div style="position:absolute;left:8px;top:348px;width:37px;height:1px;background:#a0a0a0"></div>
<span class="t" style="left:25.44px;top:332.69px;font-size:11px;line-height:11px;color:#000;">4</span>
<span class="t" style="left:48.00px;top:332.69px;font-size:11px;line-height:11px;color:#000;letter-spacing:-0.721px;">TEMELFATURA</span>
<span class="t" style="left:148.00px;top:332.69px;font-size:11px;line-height:11px;color:#000;letter-spacing:-0.620px;">SATIS</span>
<span class="t" style="left:249.00px;top:332.69px;font-size:11px;line-height:11px;color:#0000ff;text-decoration:underline;">TRN2024000000...</span>
<span class="t" style="left:352.00px;top:332.69px;font-size:11px;line-height:11px;color:#000;">1.04.2024</span>
<span class="t" style="left:451.00px;top:332.69px;font-size:11px;line-height:11px;color:#000;letter-spacing:-0.524px;">SODEXO AVANT...</span>
<span class="t" style="left:628.00px;top:332.69px;font-size:11px;line-height:11px;color:#000;letter-spacing:-0.593px;">BEKLEMEDE - SA...</span>
<span class="t" style="left:779.17px;top:332.69px;font-size:11px;line-height:11px;color:#000;">7.136,91</span>
<span class="t" style="left:888.34px;top:332.69px;font-size:11px;line-height:11px;color:#000;">713,69</span>
<span class="t" style="left:979.17px;top:332.69px;font-size:11px;line-height:11px;color:#000;">7.850,60</span>
<span class="t" style="left:1200.58px;top:332.69px;font-size:11px;line-height:11px;color:#000;">0,00</span>
<span class="t" style="left:1230.00px;top:332.69px;font-size:11px;line-height:11px;color:#000;">600.20</span>
<span class="t" style="left:1400.58px;top:332.69px;font-size:11px;line-height:11px;color:#000;">0,00</span>
<span class="t" style="left:1430.00px;top:332.69px;font-size:11px;line-height:11px;color:#000;">391.20</span>
<span class="t" style="left:1700.58px;top:332.69px;font-size:11px;line-height:11px;color:#000;">0,00</span>
<span class="t" style="left:1730.00px;top:332.69px;font-size:11px;line-height:11px;color:#000;">600.18</span>
<div style="position:absolute;left:46px;top:370px;width:1852px;height:1px;background:#a0a0a0"></div>
<div style="position:absolute;left:8px;top:370px;width:37px;height:1px;background:#a0a0a0"></div>
<span class="t" style="left:25.44px;top:354.69px;font-size:11px;line-height:11px;color:#000;">5</span>
<span class="t" style="left:48.00px;top:354.69px;font-size:11px;line-height:11px;color:#000;letter-spacing:-0.721px;">TEMELFATURA</span>
<span class="t" style="left:148.00px;top:354.69px;font-size:11px;line-height:11px;color:#000;letter-spacing:-0.620px;">SATIS</span>
<span class="t" style="left:249.00px;top:354.69px;font-size:11px;line-height:11px;color:#0000ff;text-decoration:underline;">TRN2024000000...</span>
<span class="t" style="left:352.00px;top:354.69px;font-size:11px;line-height:11px;color:#000;">1.04.2024</span>
<span class="t" style="left:451.00px;top:354.69px;font-size:11px;line-height:11px;color:#000;letter-spacing:-0.517px;">MULTINET KURU...</span>
<span class="t" style="left:628.00px;top:354.69px;font-size:11px;line-height:11px;color:#000;letter-spacing:-0.593px;">BEKLEMEDE - SA...</span>
<span class="t" style="left:788.34px;top:354.69px;font-size:11px;line-height:11px;color:#000;">349,23</span>
<span class="t" style="left:894.47px;top:354.69px;font-size:11px;line-height:11px;color:#000;">34,92</span>
<span class="t" style="left:988.34px;top:354.69px;font-size:11px;line-height:11px;color:#000;">384,15</span>
<span class="t" style="left:1200.58px;top:354.69px;font-size:11px;line-height:11px;color:#000;">0,00</span>
<span class="t" style="left:1230.00px;top:354.69px;font-size:11px;line-height:11px;color:#000;">600.20</span>
<span class="t" style="left:1400.58px;top:354.69px;font-size:11px;line-height:11px;color:#000;">0,00</span>
<span class="t" style="left:1430.00px;top:354.69px;font-size:11px;line-height:11px;color:#000;">391.20</span>
<span class="t" style="left:1700.58px;top:354.69px;font-size:11px;line-height:11px;color:#000;">0,00</span>
<span class="t" style="left:1730.00px;top:354.69px;font-size:11px;line-height:11px;color:#000;">600.18</span>
<div style="position:absolute;left:46px;top:392px;width:1852px;height:1px;background:#a0a0a0"></div>
<div style="position:absolute;left:8px;top:392px;width:37px;height:1px;background:#a0a0a0"></div>
<span class="t" style="left:25.44px;top:376.69px;font-size:11px;line-height:11px;color:#000;">6</span>
<span class="t" style="left:48.00px;top:376.69px;font-size:11px;line-height:11px;color:#000;letter-spacing:-0.721px;">TEMELFATURA</span>
<span class="t" style="left:148.00px;top:376.69px;font-size:11px;line-height:11px;color:#000;letter-spacing:-0.620px;">SATIS</span>
<span class="t" style="left:249.00px;top:376.69px;font-size:11px;line-height:11px;color:#0000ff;text-decoration:underline;">TRN2024000000...</span>
<span class="t" style="left:352.00px;top:376.69px;font-size:11px;line-height:11px;color:#000;">1.04.2024</span>
<span class="t" style="left:451.00px;top:376.69px;font-size:11px;line-height:11px;color:#000;letter-spacing:-0.517px;">MULTINET KURU...</span>
<span class="t" style="left:628.00px;top:376.69px;font-size:11px;line-height:11px;color:#000;letter-spacing:-0.593px;">BEKLEMEDE - SA...</span>
<span class="t" style="left:779.17px;top:376.69px;font-size:11px;line-height:11px;color:#000;">7.004,93</span>
<span class="t" style="left:894.47px;top:376.69px;font-size:11px;line-height:11px;color:#000;">70,05</span>
<span class="t" style="left:979.17px;top:376.69px;font-size:11px;line-height:11px;color:#000;">7.074,98</span>
<span class="t" style="left:1200.58px;top:376.69px;font-size:11px;line-height:11px;color:#000;">0,00</span>
<span class="t" style="left:1230.00px;top:376.69px;font-size:11px;line-height:11px;color:#000;">600.20</span>
<span class="t" style="left:1400.58px;top:376.69px;font-size:11px;line-height:11px;color:#000;">0,00</span>
<span class="t" style="left:1430.00px;top:376.69px;font-size:11px;line-height:11px;color:#000;">391.20</span>
<span class="t" style="left:1700.58px;top:376.69px;font-size:11px;line-height:11px;color:#000;">0,00</span>
<span class="t" style="left:1730.00px;top:376.69px;font-size:11px;line-height:11px;color:#000;">600.18</span>
<div style="position:absolute;left:46px;top:414px;width:1852px;height:1px;background:#a0a0a0"></div>
<div style="position:absolute;left:8px;top:414px;width:37px;height:1px;background:#a0a0a0"></div>
<span class="t" style="left:25.44px;top:398.69px;font-size:11px;line-height:11px;color:#000;">7</span>
<span class="t" style="left:48.00px;top:398.69px;font-size:11px;line-height:11px;color:#000;letter-spacing:-0.721px;">TEMELFATURA</span>
<span class="t" style="left:148.00px;top:398.69px;font-size:11px;line-height:11px;color:#000;letter-spacing:-0.620px;">SATIS</span>
<span class="t" style="left:249.00px;top:398.69px;font-size:11px;line-height:11px;color:#0000ff;text-decoration:underline;">TRN2024000000...</span>
<span class="t" style="left:352.00px;top:398.69px;font-size:11px;line-height:11px;color:#000;">1.04.2024</span>
<span class="t" style="left:451.00px;top:398.69px;font-size:11px;line-height:11px;color:#000;letter-spacing:-0.517px;">MULTINET KURU...</span>
<span class="t" style="left:628.00px;top:398.69px;font-size:11px;line-height:11px;color:#000;letter-spacing:-0.593px;">BEKLEMEDE - SA...</span>
<span class="t" style="left:779.17px;top:398.69px;font-size:11px;line-height:11px;color:#000;">4.934,00</span>
<span class="t" style="left:888.34px;top:398.69px;font-size:11px;line-height:11px;color:#000;">493,40</span>
<span class="t" style="left:979.17px;top:398.69px;font-size:11px;line-height:11px;color:#000;">5.427,40</span>
<span class="t" style="left:1200.58px;top:398.69px;font-size:11px;line-height:11px;color:#000;">0,00</span>
<span class="t" style="left:1230.00px;top:398.69px;font-size:11px;line-height:11px;color:#000;">600.20</span>
<span class="t" style="left:1400.58px;top:398.69px;font-size:11px;line-height:11px;color:#000;">0,00</span>
<span class="t" style="left:1430.00px;top:398.69px;font-size:11px;line-height:11px;color:#000;">391.20</span>
<span class="t" style="left:1700.58px;top:398.69px;font-size:11px;line-height:11px;color:#000;">0,00</span>
<span class="t" style="left:1730.00px;top:398.69px;font-size:11px;line-height:11px;color:#000;">600.18</span>
<div style="position:absolute;left:46px;top:436px;width:1852px;height:1px;background:#a0a0a0"></div>
<div style="position:absolute;left:8px;top:436px;width:37px;height:1px;background:#a0a0a0"></div>
<span class="t" style="left:25.44px;top:420.69px;font-size:11px;line-height:11px;color:#000;">8</span>
<span class="t" style="left:48.00px;top:420.69px;font-size:11px;line-height:11px;color:#000;letter-spacing:-0.721px;">TEMELFATURA</span>
<span class="t" style="left:148.00px;top:420.69px;font-size:11px;line-height:11px;color:#000;letter-spacing:-0.620px;">SATIS</span>
<span class="t" style="left:249.00px;top:420.69px;font-size:11px;line-height:11px;color:#0000ff;text-decoration:underline;">TRN2024000000...</span>
<span class="t" style="left:352.00px;top:420.69px;font-size:11px;line-height:11px;color:#000;">1.04.2024</span>
<span class="t" style="left:451.00px;top:420.69px;font-size:11px;line-height:11px;color:#000;letter-spacing:-0.505px;">İMC GROUP GID...</span>
<span class="t" style="left:628.00px;top:420.69px;font-size:11px;line-height:11px;color:#000;letter-spacing:-0.593px;">BEKLEMEDE - SA...</span>
<span class="t" style="left:788.34px;top:420.69px;font-size:11px;line-height:11px;color:#000;">990,10</span>
<span class="t" style="left:900.58px;top:420.69px;font-size:11px;line-height:11px;color:#000;">9,90</span>
<span class="t" style="left:979.17px;top:420.69px;font-size:11px;line-height:11px;color:#000;">1.000,00</span>
<span class="t" style="left:1200.58px;top:420.69px;font-size:11px;line-height:11px;color:#000;">0,00</span>
<span class="t" style="left:1230.00px;top:420.69px;font-size:11px;line-height:11px;color:#000;">600.20</span>
<span class="t" style="left:1400.58px;top:420.69px;font-size:11px;line-height:11px;color:#000;">0,00</span>
<span class="t" style="left:1430.00px;top:420.69px;font-size:11px;line-height:11px;color:#000;">391.20</span>
<span class="t" style="left:1700.58px;top:420.69px;font-size:11px;line-height:11px;color:#000;">0,00</span>
<span class="t" style="left:1730.00px;top:420.69px;font-size:11px;line-height:11px;color:#000;">600.18</span>
<div style="position:absolute;left:46px;top:458px;width:1852px;height:1px;background:#a0a0a0"></div>
<div style="position:absolute;left:8px;top:458px;width:37px;height:1px;background:#a0a0a0"></div>
<span class="t" style="left:25.44px;top:442.69px;font-size:11px;line-height:11px;color:#000;">9</span>
<span class="t" style="left:48.00px;top:442.69px;font-size:11px;line-height:11px;color:#000;letter-spacing:-0.721px;">TEMELFATURA</span>
<span class="t" style="left:148.00px;top:442.69px;font-size:11px;line-height:11px;color:#000;letter-spacing:-0.620px;">SATIS</span>
<span class="t" style="left:249.00px;top:442.69px;font-size:11px;line-height:11px;color:#0000ff;text-decoration:underline;">TRN2024000000...</span>
<span class="t" style="left:352.00px;top:442.69px;font-size:11px;line-height:11px;color:#000;">2.04.2024</span>
<span class="t" style="left:451.00px;top:442.69px;font-size:11px;line-height:11px;color:#000;letter-spacing:-0.523px;">BOZKUŞLAR GID...</span>
<span class="t" style="left:628.00px;top:442.69px;font-size:11px;line-height:11px;color:#000;letter-spacing:-0.593px;">BEKLEMEDE - SA...</span>
<span class="t" style="left:773.06px;top:442.69px;font-size:11px;line-height:11px;color:#000;">25.598,00</span>
<span class="t" style="left:879.98px;top:442.69px;font-size:11px;line-height:11px;color:#000;">5.119,60</span>
<span class="t" style="left:973.06px;top:442.69px;font-size:11px;line-height:11px;color:#000;">30.717,60</span>
<span class="t" style="left:1173.06px;top:442.69px;font-size:11px;line-height:11px;color:#000;">25.598,00</span>
<span class="t" style="left:1230.00px;top:442.69px;font-size:11px;line-height:11px;color:#000;">600.20</span>
<span class="t" style="left:1379.98px;top:442.69px;font-size:11px;line-height:11px;color:#000;">5.119,60</span>
<span class="t" style="left:1430.00px;top:442.69px;font-size:11px;line-height:11px;color:#000;">391.20</span>
<span class="t" style="left:1700.58px;top:442.69px;font-size:11px;line-height:11px;color:#000;">0,00</span>
<span class="t" style="left:1730.00px;top:442.69px;font-size:11px;line-height:11px;color:#000;">600.18</span>
<div style="position:absolute;left:46px;top:480px;width:1852px;height:1px;background:#a0a0a0"></div>
<div style="position:absolute;left:8px;top:480px;width:37px;height:1px;background:#a0a0a0"></div>
<span class="t" style="left:22.38px;top:464.69px;font-size:11px;line-height:11px;color:#000;">10</span>
<span class="t" style="left:48.00px;top:464.69px;font-size:11px;line-height:11px;color:#000;letter-spacing:-0.721px;">TEMELFATURA</span>
<span class="t" style="left:148.00px;top:464.69px;font-size:11px;line-height:11px;color:#000;letter-spacing:-0.620px;">SATIS</span>
<span class="t" style="left:249.00px;top:464.69px;font-size:11px;line-height:11px;color:#0000ff;text-decoration:underline;">TRN2024000000...</span>
<span class="t" style="left:352.00px;top:464.69px;font-size:11px;line-height:11px;color:#000;">2.04.2024</span>
<span class="t" style="left:451.00px;top:464.69px;font-size:11px;line-height:11px;color:#000;letter-spacing:-0.482px;">YILMAZ TURİZM ...</span>
<span class="t" style="left:628.00px;top:464.69px;font-size:11px;line-height:11px;color:#000;letter-spacing:-0.593px;">BEKLEMEDE - SA...</span>
<span class="t" style="left:788.34px;top:464.69px;font-size:11px;line-height:11px;color:#000;">247,52</span>
<span class="t" style="left:900.58px;top:464.69px;font-size:11px;line-height:11px;color:#000;">2,48</span>
<span class="t" style="left:988.34px;top:464.69px;font-size:11px;line-height:11px;color:#000;">250,00</span>
<span class="t" style="left:1200.58px;top:464.69px;font-size:11px;line-height:11px;color:#000;">0,00</span>
<span class="t" style="left:1230.00px;top:464.69px;font-size:11px;line-height:11px;color:#000;">600.20</span>
<span class="t" style="left:1400.58px;top:464.69px;font-size:11px;line-height:11px;color:#000;">0,00</span>
<span class="t" style="left:1430.00px;top:464.69px;font-size:11px;line-height:11px;color:#000;">391.20</span>
<span class="t" style="left:1700.58px;top:464.69px;font-size:11px;line-height:11px;color:#000;">0,00</span>
<span class="t" style="left:1730.00px;top:464.69px;font-size:11px;line-height:11px;color:#000;">600.18</span>
<div style="position:absolute;left:46px;top:502px;width:1852px;height:1px;background:#a0a0a0"></div>
<div style="position:absolute;left:8px;top:502px;width:37px;height:1px;background:#a0a0a0"></div>
<span class="t" style="left:22.79px;top:486.69px;font-size:11px;line-height:11px;color:#000;">11</span>
<span class="t" style="left:48.00px;top:486.69px;font-size:11px;line-height:11px;color:#000;letter-spacing:-0.721px;">TEMELFATURA</span>
<span class="t" style="left:148.00px;top:486.69px;font-size:11px;line-height:11px;color:#000;letter-spacing:-0.620px;">SATIS</span>
<span class="t" style="left:249.00px;top:486.69px;font-size:11px;line-height:11px;color:#0000ff;text-decoration:underline;">TRN2024000000...</span>
<span class="t" style="left:352.00px;top:486.69px;font-size:11px;line-height:11px;color:#000;">2.04.2024</span>
<span class="t" style="left:451.00px;top:486.69px;font-size:11px;line-height:11px;color:#000;letter-spacing:-0.485px;">HKS SENTETİK T...</span>
<span class="t" style="left:628.00px;top:486.69px;font-size:11px;line-height:11px;color:#000;letter-spacing:-0.593px;">BEKLEMEDE - SA...</span>
<span class="t" style="left:773.06px;top:486.69px;font-size:11px;line-height:11px;color:#000;">59.842,31</span>
<span class="t" style="left:879.17px;top:486.69px;font-size:11px;line-height:11px;color:#000;">3.157,69</span>
<span class="t" style="left:973.06px;top:486.69px;font-size:11px;line-height:11px;color:#000;">63.000,00</span>
<span class="t" style="left:1173.06px;top:486.69px;font-size:11px;line-height:11px;color:#000;">13.469,81</span>
<span class="t" style="left:1230.00px;top:486.69px;font-size:11px;line-height:11px;color:#000;">600.20</span>
<span class="t" style="left:1379.17px;top:486.69px;font-size:11px;line-height:11px;color:#000;">2.693,96</span>
<span class="t" style="left:1430.00px;top:486.69px;font-size:11px;line-height:11px;color:#000;">391.20</span>
<span class="t" style="left:1700.58px;top:486.69px;font-size:11px;line-height:11px;color:#000;">0,00</span>
<span class="t" style="left:1730.00px;top:486.69px;font-size:11px;line-height:11px;color:#000;">600.18</span>
<div style="position:absolute;left:46px;top:524px;width:1852px;height:1px;background:#a0a0a0"></div>
<div style="position:absolute;left:8px;top:524px;width:37px;height:1px;background:#a0a0a0"></div>
<span class="t" style="left:22.38px;top:508.69px;font-size:11px;line-height:11px;color:#000;">12</span>
<span class="t" style="left:48.00px;top:508.69px;font-size:11px;line-height:11px;color:#000;letter-spacing:-0.721px;">TEMELFATURA</span>
<span class="t" style="left:148.00px;top:508.69px;font-size:11px;line-height:11px;color:#000;letter-spacing:-0.620px;">SATIS</span>
<span class="t" style="left:249.00px;top:508.69px;font-size:11px;line-height:11px;color:#0000ff;text-decoration:underline;">TRN2024000000...</span>
<span class="t" style="left:352.00px;top:508.69px;font-size:11px;line-height:11px;color:#000;">3.04.2024</span>
<span class="t" style="left:451.00px;top:508.69px;font-size:11px;line-height:11px;color:#000;letter-spacing:-0.484px;">BİGA GÜÇLÜ GI...</span>
<span class="t" style="left:628.00px;top:508.69px;font-size:11px;line-height:11px;color:#000;letter-spacing:-0.593px;">BEKLEMEDE - SA...</span>
<span class="t" style="left:766.94px;top:508.69px;font-size:11px;line-height:11px;color:#000;">126.668,24</span>
<span class="t" style="left:879.17px;top:508.69px;font-size:11px;line-height:11px;color:#000;">1.266,68</span>
<span class="t" style="left:966.94px;top:508.69px;font-size:11px;line-height:11px;color:#000;">127.934,92</span>
<span class="t" style="left:1200.58px;top:508.69px;font-size:11px;line-height:11px;color:#000;">0,00</span>
<span class="t" style="left:1230.00px;top:508.69px;font-size:11px;line-height:11px;color:#000;">600.20</span>
<span class="t" style="left:1400.58px;top:508.69px;font-size:11px;line-height:11px;color:#000;">0,00</span>
<span class="t" style="left:1430.00px;top:508.69px;font-size:11px;line-height:11px;color:#000;">391.20</span>
<span class="t" style="left:1700.58px;top:508.69px;font-size:11px;line-height:11px;color:#000;">0,00</span>
<span class="t" style="left:1730.00px;top:508.69px;font-size:11px;line-height:11px;color:#000;">600.18</span>
<div style="position:absolute;left:46px;top:546px;width:1852px;height:1px;background:#a0a0a0"></div>
<div style="position:absolute;left:8px;top:546px;width:37px;height:1px;background:#a0a0a0"></div>
<span class="t" style="left:22.38px;top:530.69px;font-size:11px;line-height:11px;color:#000;">13</span>
<span class="t" style="left:48.00px;top:530.69px;font-size:11px;line-height:11px;color:#000;letter-spacing:-0.721px;">TEMELFATURA</span>
<span class="t" style="left:148.00px;top:530.69px;font-size:11px;line-height:11px;color:#000;letter-spacing:-0.620px;">SATIS</span>
<span class="t" style="left:249.00px;top:530.69px;font-size:11px;line-height:11px;color:#0000ff;text-decoration:underline;">TRN2024000000...</span>
<span class="t" style="left:352.00px;top:530.69px;font-size:11px;line-height:11px;color:#000;">4.04.2024</span>
<span class="t" style="left:451.00px;top:530.69px;font-size:11px;line-height:11px;color:#000;letter-spacing:-0.517px;">MULTINET KURU...</span>
<span class="t" style="left:628.00px;top:530.69px;font-size:11px;line-height:11px;color:#000;letter-spacing:-0.557px;">ONAYLANDI - S...</span>
<span class="t" style="left:794.47px;top:530.69px;font-size:11px;line-height:11px;color:#000;">26,73</span>
<span class="t" style="left:900.58px;top:530.69px;font-size:11px;line-height:11px;color:#000;">0,27</span>
<span class="t" style="left:994.47px;top:530.69px;font-size:11px;line-height:11px;color:#000;">27,00</span>
<span class="t" style="left:1200.58px;top:530.69px;font-size:11px;line-height:11px;color:#000;">0,00</span>
<span class="t" style="left:1230.00px;top:530.69px;font-size:11px;line-height:11px;color:#000;">600.20</span>
<span class="t" style="left:1400.58px;top:530.69px;font-size:11px;line-height:11px;color:#000;">0,00</span>
<span class="t" style="left:1430.00px;top:530.69px;font-size:11px;line-height:11px;color:#000;">391.20</span>
<span class="t" style="left:1700.58px;top:530.69px;font-size:11px;line-height:11px;color:#000;">0,00</span>
<span class="t" style="left:1730.00px;top:530.69px;font-size:11px;line-height:11px;color:#000;">600.18</span>
<div style="position:absolute;left:46px;top:547px;width:1852px;height:21px;background:#ff4500"></div>
<div style="position:absolute;left:46px;top:568px;width:1852px;height:1px;background:#a0a0a0"></div>
<div style="position:absolute;left:8px;top:568px;width:37px;height:1px;background:#a0a0a0"></div>
<span class="t" style="left:22.38px;top:552.69px;font-size:11px;line-height:11px;color:#000;">14</span>
<span class="t" style="left:48.00px;top:552.69px;font-size:11px;line-height:11px;color:#000;letter-spacing:-0.721px;">TEMELFATURA</span>
<span class="t" style="left:148.00px;top:552.69px;font-size:11px;line-height:11px;color:#000;letter-spacing:-0.642px;">IADE</span>
<span class="t" style="left:249.00px;top:552.69px;font-size:11px;line-height:11px;color:#0000ff;text-decoration:underline;">TRN2024000000...</span>
<span class="t" style="left:352.00px;top:552.69px;font-size:11px;line-height:11px;color:#000;">4.04.2024</span>
<span class="t" style="left:451.00px;top:552.69px;font-size:11px;line-height:11px;color:#000;letter-spacing:-0.501px;">KÖSELECİLER GI...</span>
<span class="t" style="left:628.00px;top:552.69px;font-size:11px;line-height:11px;color:#000;letter-spacing:-0.568px;">BEKLEMEDE - IA...</span>
<span class="t" style="left:779.17px;top:552.69px;font-size:11px;line-height:11px;color:#000;">2.231,46</span>
<span class="t" style="left:894.47px;top:552.69px;font-size:11px;line-height:11px;color:#000;">22,32</span>
<span class="t" style="left:979.17px;top:552.69px;font-size:11px;line-height:11px;color:#000;">2.253,78</span>
<span class="t" style="left:1200.58px;top:552.69px;font-size:11px;line-height:11px;color:#000;">0,00</span>
<span class="t" style="left:1230.00px;top:552.69px;font-size:11px;line-height:11px;color:#000;">153.20</span>
<span class="t" style="left:1400.58px;top:552.69px;font-size:11px;line-height:11px;color:#000;">0,00</span>
<span class="t" style="left:1430.00px;top:552.69px;font-size:11px;line-height:11px;color:#000;">391.20</span>
<span class="t" style="left:1700.58px;top:552.69px;font-size:11px;line-height:11px;color:#000;">0,00</span>
<span class="t" style="left:1730.00px;top:552.69px;font-size:11px;line-height:11px;color:#000;">153.18</span>
<div style="position:absolute;left:46px;top:569px;width:1852px;height:21px;background:#ff4500"></div>
<div style="position:absolute;left:46px;top:590px;width:1852px;height:1px;background:#a0a0a0"></div>
<div style="position:absolute;left:8px;top:590px;width:37px;height:1px;background:#a0a0a0"></div>
<span class="t" style="left:22.38px;top:574.69px;font-size:11px;line-height:11px;color:#000;">15</span>
<span class="t" style="left:48.00px;top:574.69px;font-size:11px;line-height:11px;color:#000;letter-spacing:-0.721px;">TEMELFATURA</span>
<span class="t" style="left:148.00px;top:574.69px;font-size:11px;line-height:11px;color:#000;letter-spacing:-0.642px;">IADE</span>
<span class="t" style="left:249.00px;top:574.69px;font-size:11px;line-height:11px;color:#0000ff;text-decoration:underline;">TRN2024000000...</span>
<span class="t" style="left:352.00px;top:574.69px;font-size:11px;line-height:11px;color:#000;">5.04.2024</span>
<span class="t" style="left:451.00px;top:574.69px;font-size:11px;line-height:11px;color:#000;letter-spacing:-0.501px;">KÖSELECİLER GI...</span>
<span class="t" style="left:628.00px;top:574.69px;font-size:11px;line-height:11px;color:#000;letter-spacing:-0.568px;">BEKLEMEDE - IA...</span>
<span class="t" style="left:788.34px;top:574.69px;font-size:11px;line-height:11px;color:#000;">299,88</span>
<span class="t" style="left:900.58px;top:574.69px;font-size:11px;line-height:11px;color:#000;">3,00</span>
<span class="t" style="left:988.34px;top:574.69px;font-size:11px;line-height:11px;color:#000;">302,88</span>
<span class="t" style="left:1200.58px;top:574.69px;font-size:11px;line-height:11px;color:#000;">0,00</span>
<span class="t" style="left:1230.00px;top:574.69px;font-size:11px;line-height:11px;color:#000;">153.20</span>
<span class="t" style="left:1400.58px;top:574.69px;font-size:11px;line-height:11px;color:#000;">0,00</span>
<span class="t" style="left:1430.00px;top:574.69px;font-size:11px;line-height:11px;color:#000;">391.20</span>
<span class="t" style="left:1700.58px;top:574.69px;font-size:11px;line-height:11px;color:#000;">0,00</span>
<span class="t" style="left:1730.00px;top:574.69px;font-size:11px;line-height:11px;color:#000;">153.18</span>
<div style="position:absolute;left:46px;top:612px;width:1852px;height:1px;background:#a0a0a0"></div>
<div style="position:absolute;left:8px;top:612px;width:37px;height:1px;background:#a0a0a0"></div>
<span class="t" style="left:22.38px;top:596.69px;font-size:11px;line-height:11px;color:#000;">16</span>
<span class="t" style="left:48.00px;top:596.69px;font-size:11px;line-height:11px;color:#000;letter-spacing:-0.721px;">TEMELFATURA</span>
<span class="t" style="left:148.00px;top:596.69px;font-size:11px;line-height:11px;color:#000;letter-spacing:-0.620px;">SATIS</span>
<span class="t" style="left:249.00px;top:596.69px;font-size:11px;line-height:11px;color:#0000ff;text-decoration:underline;">TRN2024000000...</span>
<span class="t" style="left:352.00px;top:596.69px;font-size:11px;line-height:11px;color:#000;">8.04.2024</span>
<span class="t" style="left:451.00px;top:596.69px;font-size:11px;line-height:11px;color:#000;letter-spacing:-0.608px;">ÖZCAN SAVUR</span>
<span class="t" style="left:628.00px;top:596.69px;font-size:11px;line-height:11px;color:#000;letter-spacing:-0.593px;">BEKLEMEDE - SA...</span>
<span class="t" style="left:773.06px;top:596.69px;font-size:11px;line-height:11px;color:#000;">19.801,98</span>
<span class="t" style="left:888.34px;top:596.69px;font-size:11px;line-height:11px;color:#000;">198,02</span>
<span class="t" style="left:973.06px;top:596.69px;font-size:11px;line-height:11px;color:#000;">20.000,00</span>
<span class="t" style="left:1200.58px;top:596.69px;font-size:11px;line-height:11px;color:#000;">0,00</span>
<span class="t" style="left:1230.00px;top:596.69px;font-size:11px;line-height:11px;color:#000;">600.20</span>
<span class="t" style="left:1400.58px;top:596.69px;font-size:11px;line-height:11px;color:#000;">0,00</span>
<span class="t" style="left:1430.00px;top:596.69px;font-size:11px;line-height:11px;color:#000;">391.20</span>
<span class="t" style="left:1700.58px;top:596.69px;font-size:11px;line-height:11px;color:#000;">0,00</span>
<span class="t" style="left:1730.00px;top:596.69px;font-size:11px;line-height:11px;color:#000;">600.18</span>
<div style="position:absolute;left:46px;top:634px;width:1852px;height:1px;background:#a0a0a0"></div>
<div style="position:absolute;left:8px;top:634px;width:37px;height:1px;background:#a0a0a0"></div>
<span class="t" style="left:22.38px;top:618.69px;font-size:11px;line-height:11px;color:#000;">17</span>
<span class="t" style="left:48.00px;top:618.69px;font-size:11px;line-height:11px;color:#000;letter-spacing:-0.655px;">TICARIFATURA</span>
<span class="t" style="left:148.00px;top:618.69px;font-size:11px;line-height:11px;color:#000;letter-spacing:-0.620px;">SATIS</span>
<span class="t" style="left:249.00px;top:618.69px;font-size:11px;line-height:11px;color:#0000ff;text-decoration:underline;">TRN2024000000...</span>
<span class="t" style="left:352.00px;top:618.69px;font-size:11px;line-height:11px;color:#000;">8.04.2024</span>
<span class="t" style="left:451.00px;top:618.69px;font-size:11px;line-height:11px;color:#000;letter-spacing:-0.518px;">ALTINORDU MA...</span>
<span class="t" style="left:628.00px;top:618.69px;font-size:11px;line-height:11px;color:#000;letter-spacing:-0.557px;">ONAYLANDI - S...</span>
<span class="t" style="left:773.06px;top:618.69px;font-size:11px;line-height:11px;color:#000;">19.189,90</span>
<span class="t" style="left:879.17px;top:618.69px;font-size:11px;line-height:11px;color:#000;">3.419,43</span>
<span class="t" style="left:973.06px;top:618.69px;font-size:11px;line-height:11px;color:#000;">22.609,33</span>
<span class="t" style="left:1173.06px;top:618.69px;font-size:11px;line-height:11px;color:#000;">16.987,00</span>
<span class="t" style="left:1230.00px;top:618.69px;font-size:11px;line-height:11px;color:#000;">600.20</span>
<span class="t" style="left:1379.17px;top:618.69px;font-size:11px;line-height:11px;color:#000;">3.397,40</span>
<span class="t" style="left:1430.00px;top:618.69px;font-size:11px;line-height:11px;color:#000;">391.20</span>
<span class="t" style="left:1700.58px;top:618.69px;font-size:11px;line-height:11px;color:#000;">0,00</span>
<span class="t" style="left:1730.00px;top:618.69px;font-size:11px;line-height:11px;color:#000;">600.18</span>
<div style="position:absolute;left:46px;top:656px;width:1852px;height:1px;background:#a0a0a0"></div>
<div style="position:absolute;left:8px;top:656px;width:37px;height:1px;background:#a0a0a0"></div>
<span class="t" style="left:22.38px;top:640.69px;font-size:11px;line-height:11px;color:#000;">18</span>
<span class="t" style="left:48.00px;top:640.69px;font-size:11px;line-height:11px;color:#000;letter-spacing:-0.721px;">TEMELFATURA</span>
<span class="t" style="left:148.00px;top:640.69px;font-size:11px;line-height:11px;color:#000;letter-spacing:-0.620px;">SATIS</span>
<span class="t" style="left:249.00px;top:640.69px;font-size:11px;line-height:11px;color:#0000ff;text-decoration:underline;">TRN2024000000...</span>
<span class="t" style="left:352.00px;top:640.69px;font-size:11px;line-height:11px;color:#000;">8.04.2024</span>
<span class="t" style="left:451.00px;top:640.69px;font-size:11px;line-height:11px;color:#000;letter-spacing:-0.524px;">SODEXO AVANT...</span>
<span class="t" style="left:628.00px;top:640.69px;font-size:11px;line-height:11px;color:#000;letter-spacing:-0.593px;">BEKLEMEDE - SA...</span>
<span class="t" style="left:773.06px;top:640.69px;font-size:11px;line-height:11px;color:#000;">57.954,61</span>
<span class="t" style="left:879.17px;top:640.69px;font-size:11px;line-height:11px;color:#000;">5.795,46</span>
<span class="t" style="left:973.06px;top:640.69px;font-size:11px;line-height:11px;color:#000;">63.750,07</span>
<span class="t" style="left:1200.58px;top:640.69px;font-size:11px;line-height:11px;color:#000;">0,00</span>
<span class="t" style="left:1230.00px;top:640.69px;font-size:11px;line-height:11px;color:#000;">600.20</span>
<span class="t" style="left:1400.58px;top:640.69px;font-size:11px;line-height:11px;color:#000;">0,00</span>
<span class="t" style="left:1430.00px;top:640.69px;font-size:11px;line-height:11px;color:#000;">391.20</span>
<span class="t" style="left:1700.58px;top:640.69px;font-size:11px;line-height:11px;color:#000;">0,00</span>
<span class="t" style="left:1730.00px;top:640.69px;font-size:11px;line-height:11px;color:#000;">600.18</span>
<div style="position:absolute;left:46px;top:678px;width:1852px;height:1px;background:#a0a0a0"></div>
<div style="position:absolute;left:8px;top:678px;width:37px;height:1px;background:#a0a0a0"></div>
<span class="t" style="left:22.38px;top:662.69px;font-size:11px;line-height:11px;color:#000;">19</span>
<span class="t" style="left:48.00px;top:662.69px;font-size:11px;line-height:11px;color:#000;letter-spacing:-0.721px;">TEMELFATURA</span>
<span class="t" style="left:148.00px;top:662.69px;font-size:11px;line-height:11px;color:#000;letter-spacing:-0.620px;">SATIS</span>
<span class="t" style="left:249.00px;top:662.69px;font-size:11px;line-height:11px;color:#0000ff;text-decoration:underline;">TRN2024000000...</span>
<span class="t" style="left:352.00px;top:662.69px;font-size:11px;line-height:11px;color:#000;">8.04.2024</span>
<span class="t" style="left:451.00px;top:662.69px;font-size:11px;line-height:11px;color:#000;letter-spacing:-0.524px;">SODEXO AVANT...</span>
<span class="t" style="left:628.00px;top:662.69px;font-size:11px;line-height:11px;color:#000;letter-spacing:-0.593px;">BEKLEMEDE - SA...</span>
<span class="t" style="left:779.17px;top:662.69px;font-size:11px;line-height:11px;color:#000;">8.041,32</span>
<span class="t" style="left:894.47px;top:662.69px;font-size:11px;line-height:11px;color:#000;">80,41</span>
<span class="t" style="left:979.17px;top:662.69px;font-size:11px;line-height:11px;color:#000;">8.121,73</span>
<span class="t" style="left:1200.58px;top:662.69px;font-size:11px;line-height:11px;color:#000;">0,00</span>
<span class="t" style="left:1230.00px;top:662.69px;font-size:11px;line-height:11px;color:#000;">600.20</span>
<span class="t" style="left:1400.58px;top:662.69px;font-size:11px;line-height:11px;color:#000;">0,00</span>
<span class="t" style="left:1430.00px;top:662.69px;font-size:11px;line-height:11px;color:#000;">391.20</span>
<span class="t" style="left:1700.58px;top:662.69px;font-size:11px;line-height:11px;color:#000;">0,00</span>
<span class="t" style="left:1730.00px;top:662.69px;font-size:11px;line-height:11px;color:#000;">600.18</span>
<div style="position:absolute;left:46px;top:700px;width:1852px;height:1px;background:#a0a0a0"></div>
<div style="position:absolute;left:8px;top:700px;width:37px;height:1px;background:#a0a0a0"></div>
<span class="t" style="left:22.38px;top:684.69px;font-size:11px;line-height:11px;color:#000;">20</span>
<span class="t" style="left:48.00px;top:684.69px;font-size:11px;line-height:11px;color:#000;letter-spacing:-0.691px;">EARSIVFATURA</span>
<span class="t" style="left:148.00px;top:684.69px;font-size:11px;line-height:11px;color:#000;letter-spacing:-0.620px;">SATIS</span>
<span class="t" style="left:249.00px;top:684.69px;font-size:11px;line-height:11px;color:#0000ff;text-decoration:underline;">TRY2024000000...</span>
<span class="t" style="left:352.00px;top:684.69px;font-size:11px;line-height:11px;color:#000;">8.04.2024</span>
<span class="t" style="left:451.00px;top:684.69px;font-size:11px;line-height:11px;color:#000;letter-spacing:-0.563px;">NİDA ÖZDEMİR</span>
<span class="t" style="left:628.00px;top:684.69px;font-size:11px;line-height:11px;color:#000;letter-spacing:-0.557px;">ONAYLANDI - S...</span>
<span class="t" style="left:779.17px;top:684.69px;font-size:11px;line-height:11px;color:#000;">2.277,22</span>
<span class="t" style="left:894.47px;top:684.69px;font-size:11px;line-height:11px;color:#000;">22,78</span>
<span class="t" style="left:979.17px;top:684.69px;font-size:11px;line-height:11px;color:#000;">2.300,00</span>
<span class="t" style="left:1200.58px;top:684.69px;font-size:11px;line-height:11px;color:#000;">0,00</span>
<span class="t" style="left:1230.00px;top:684.69px;font-size:11px;line-height:11px;color:#000;">600.20</span>
<span class="t" style="left:1400.58px;top:684.69px;font-size:11px;line-height:11px;color:#000;">0,00</span>
<span class="t" style="left:1430.00px;top:684.69px;font-size:11px;line-height:11px;color:#000;">391.20</span>
<span class="t" style="left:1700.58px;top:684.69px;font-size:11px;line-height:11px;color:#000;">0,00</span>
<span class="t" style="left:1730.00px;top:684.69px;font-size:11px;line-height:11px;color:#000;">600.18</span>
<div style="position:absolute;left:46px;top:722px;width:1852px;height:1px;background:#a0a0a0"></div>
<div style="position:absolute;left:8px;top:722px;width:37px;height:1px;background:#a0a0a0"></div>
<span class="t" style="left:22.38px;top:706.69px;font-size:11px;line-height:11px;color:#000;">21</span>
<span class="t" style="left:48.00px;top:706.69px;font-size:11px;line-height:11px;color:#000;letter-spacing:-0.721px;">TEMELFATURA</span>
<span class="t" style="left:148.00px;top:706.69px;font-size:11px;line-height:11px;color:#000;letter-spacing:-0.620px;">SATIS</span>
<span class="t" style="left:249.00px;top:706.69px;font-size:11px;line-height:11px;color:#0000ff;text-decoration:underline;">TRN2024000000...</span>
<span class="t" style="left:352.00px;top:706.69px;font-size:11px;line-height:11px;color:#000;">15.04.2024</span>
<span class="t" style="left:451.00px;top:706.69px;font-size:11px;line-height:11px;color:#000;letter-spacing:-0.484px;">BİGA GÜÇLÜ GI...</span>
<span class="t" style="left:628.00px;top:706.69px;font-size:11px;line-height:11px;color:#000;letter-spacing:-0.593px;">BEKLEMEDE - SA...</span>
<span class="t" style="left:766.94px;top:706.69px;font-size:11px;line-height:11px;color:#000;">174.977,90</span>
<span class="t" style="left:879.17px;top:706.69px;font-size:11px;line-height:11px;color:#000;">1.749,79</span>
<span class="t" style="left:966.94px;top:706.69px;font-size:11px;line-height:11px;color:#000;">176.727,69</span>
<span class="t" style="left:1200.58px;top:706.69px;font-size:11px;line-height:11px;color:#000;">0,00</span>
<span class="t" style="left:1230.00px;top:706.69px;font-size:11px;line-height:11px;color:#000;">600.20</span>
<span class="t" style="left:1400.58px;top:706.69px;font-size:11px;line-height:11px;color:#000;">0,00</span>
<span class="t" style="left:1430.00px;top:706.69px;font-size:11px;line-height:11px;color:#000;">391.20</span>
<span class="t" style="left:1700.58px;top:706.69px;font-size:11px;line-height:11px;color:#000;">0,00</span>
<span class="t" style="left:1730.00px;top:706.69px;font-size:11px;line-height:11px;color:#000;">600.18</span>
<div style="position:absolute;left:46px;top:744px;width:1852px;height:1px;background:#a0a0a0"></div>
<div style="position:absolute;left:8px;top:744px;width:37px;height:1px;background:#a0a0a0"></div>
<span class="t" style="left:22.38px;top:728.69px;font-size:11px;line-height:11px;color:#000;">22</span>
<span class="t" style="left:48.00px;top:728.69px;font-size:11px;line-height:11px;color:#000;letter-spacing:-0.721px;">TEMELFATURA</span>
<span class="t" style="left:148.00px;top:728.69px;font-size:11px;line-height:11px;color:#000;letter-spacing:-0.620px;">SATIS</span>
<span class="t" style="left:249.00px;top:728.69px;font-size:11px;line-height:11px;color:#0000ff;text-decoration:underline;">TRN2024000000...</span>
<span class="t" style="left:352.00px;top:728.69px;font-size:11px;line-height:11px;color:#000;">15.04.2024</span>
<span class="t" style="left:451.00px;top:728.69px;font-size:11px;line-height:11px;color:#000;letter-spacing:-0.500px;">ERDAL TİCARET...</span>
<span class="t" style="left:628.00px;top:728.69px;font-size:11px;line-height:11px;color:#000;letter-spacing:-0.593px;">BEKLEMEDE - SA...</span>
<span class="t" style="left:788.34px;top:728.69px;font-size:11px;line-height:11px;color:#000;">125,99</span>
<span class="t" style="left:900.58px;top:728.69px;font-size:11px;line-height:11px;color:#000;">3,69</span>
<span class="t" style="left:988.34px;top:728.69px;font-size:11px;line-height:11px;color:#000;">129,68</span>
<span class="t" style="left:1200.58px;top:728.69px;font-size:11px;line-height:11px;color:#000;">0,00</span>
<span class="t" style="left:1230.00px;top:728.69px;font-size:11px;line-height:11px;color:#000;">600.20</span>
<span class="t" style="left:1400.58px;top:728.69px;font-size:11px;line-height:11px;color:#000;">0,00</span>
<span class="t" style="left:1430.00px;top:728.69px;font-size:11px;line-height:11px;color:#000;">391.20</span>
<span class="t" style="left:1700.58px;top:728.69px;font-size:11px;line-height:11px;color:#000;">0,00</span>
<span class="t" style="left:1730.00px;top:728.69px;font-size:11px;line-height:11px;color:#000;">600.18</span>
<div style="position:absolute;left:46px;top:745px;width:1852px;height:21px;background:#ff4500"></div>
<div style="position:absolute;left:46px;top:766px;width:1852px;height:1px;background:#a0a0a0"></div>
<div style="position:absolute;left:8px;top:766px;width:37px;height:1px;background:#a0a0a0"></div>
<span class="t" style="left:22.38px;top:750.69px;font-size:11px;line-height:11px;color:#000;">23</span>
<span class="t" style="left:48.00px;top:750.69px;font-size:11px;line-height:11px;color:#000;letter-spacing:-0.721px;">TEMELFATURA</span>
<span class="t" style="left:148.00px;top:750.69px;font-size:11px;line-height:11px;color:#000;letter-spacing:-0.642px;">IADE</span>
<span class="t" style="left:249.00px;top:750.69px;font-size:11px;line-height:11px;color:#0000ff;text-decoration:underline;">TRN2024000000...</span>
<span class="t" style="left:352.00px;top:750.69px;font-size:11px;line-height:11px;color:#000;">15.04.2024</span>
<span class="t" style="left:451.00px;top:750.69px;font-size:11px;line-height:11px;color:#000;letter-spacing:-0.515px;">ECEGIDA PAZAR...</span>
<span class="t" style="left:628.00px;top:750.69px;font-size:11px;line-height:11px;color:#000;letter-spacing:-0.568px;">BEKLEMEDE - IA...</span>
<span class="t" style="left:789.17px;top:750.69px;font-size:11px;line-height:11px;color:#000;">209,11</span>
<span class="t" style="left:900.58px;top:750.69px;font-size:11px;line-height:11px;color:#000;">2,09</span>
<span class="t" style="left:989.17px;top:750.69px;font-size:11px;line-height:11px;color:#000;">211,20</span>
<span class="t" style="left:1200.58px;top:750.69px;font-size:11px;line-height:11px;color:#000;">0,00</span>
<span class="t" style="left:1230.00px;top:750.69px;font-size:11px;line-height:11px;color:#000;">153.20</span>
<span class="t" style="left:1400.58px;top:750.69px;font-size:11px;line-height:11px;color:#000;">0,00</span>
<span class="t" style="left:1430.00px;top:750.69px;font-size:11px;line-height:11px;color:#000;">391.20</span>
<span class="t" style="left:1700.58px;top:750.69px;font-size:11px;line-height:11px;color:#000;">0,00</span>
<span class="t" style="left:1730.00px;top:750.69px;font-size:11px;line-height:11px;color:#000;">153.18</span>
<div style="position:absolute;left:46px;top:788px;width:1852px;height:1px;background:#a0a0a0"></div>
<div style="position:absolute;left:8px;top:788px;width:37px;height:1px;background:#a0a0a0"></div>
<span class="t" style="left:22.38px;top:772.69px;font-size:11px;line-height:11px;color:#000;">24</span>
<span class="t" style="left:48.00px;top:772.69px;font-size:11px;line-height:11px;color:#000;letter-spacing:-0.721px;">TEMELFATURA</span>
<span class="t" style="left:148.00px;top:772.69px;font-size:11px;line-height:11px;color:#000;letter-spacing:-0.620px;">SATIS</span>
<span class="t" style="left:249.00px;top:772.69px;font-size:11px;line-height:11px;color:#0000ff;text-decoration:underline;">TRN2024000000...</span>
<span class="t" style="left:352.00px;top:772.69px;font-size:11px;line-height:11px;color:#000;">15.04.2024</span>
<span class="t" style="left:451.00px;top:772.69px;font-size:11px;line-height:11px;color:#000;letter-spacing:-0.514px;">ARAS KARGO Y...</span>
<span class="t" style="left:628.00px;top:772.69px;font-size:11px;line-height:11px;color:#000;letter-spacing:-0.593px;">BEKLEMEDE - SA...</span>
<span class="t" style="left:788.34px;top:772.69px;font-size:11px;line-height:11px;color:#000;">445,00</span>
<span class="t" style="left:894.47px;top:772.69px;font-size:11px;line-height:11px;color:#000;">89,00</span>
<span class="t" style="left:988.34px;top:772.69px;font-size:11px;line-height:11px;color:#000;">534,00</span>
<span class="t" style="left:1188.34px;top:772.69px;font-size:11px;line-height:11px;color:#000;">445,00</span>
<span class="t" style="left:1230.00px;top:772.69px;font-size:11px;line-height:11px;color:#000;">600.20</span>
<span class="t" style="left:1394.47px;top:772.69px;font-size:11px;line-height:11px;color:#000;">89,00</span>
<span class="t" style="left:1430.00px;top:772.69px;font-size:11px;line-height:11px;color:#000;">391.20</span>
<span class="t" style="left:1700.58px;top:772.69px;font-size:11px;line-height:11px;color:#000;">0,00</span>
<span class="t" style="left:1730.00px;top:772.69px;font-size:11px;line-height:11px;color:#000;">600.18</span>
<div style="position:absolute;left:46px;top:810px;width:1852px;height:1px;background:#a0a0a0"></div>
<div style="position:absolute;left:8px;top:810px;width:37px;height:1px;background:#a0a0a0"></div>
<span class="t" style="left:22.38px;top:794.69px;font-size:11px;line-height:11px;color:#000;">25</span>
<span class="t" style="left:48.00px;top:794.69px;font-size:11px;line-height:11px;color:#000;letter-spacing:-0.691px;">EARSIVFATURA</span>
<span class="t" style="left:148.00px;top:794.69px;font-size:11px;line-height:11px;color:#000;letter-spacing:-0.620px;">SATIS</span>
<span class="t" style="left:249.00px;top:794.69px;font-size:11px;line-height:11px;color:#0000ff;text-decoration:underline;">TRY2024000000...</span>
<span class="t" style="left:352.00px;top:794.69px;font-size:11px;line-height:11px;color:#000;">15.04.2024</span>
<span class="t" style="left:451.00px;top:794.69px;font-size:11px;line-height:11px;color:#000;letter-spacing:-0.509px;">ONUR HAYRİ US...</span>
<span class="t" style="left:628.00px;top:794.69px;font-size:11px;line-height:11px;color:#000;letter-spacing:-0.557px;">ONAYLANDI - S...</span>
<span class="t" style="left:788.34px;top:794.69px;font-size:11px;line-height:11px;color:#000;">831,40</span>
<span class="t" style="left:900.58px;top:794.69px;font-size:11px;line-height:11px;color:#000;">8,31</span>
<span class="t" style="left:988.34px;top:794.69px;font-size:11px;line-height:11px;color:#000;">839,71</span>
<span class="t" style="left:1200.58px;top:794.69px;font-size:11px;line-height:11px;color:#000;">0,00</span>
<span class="t" style="left:1230.00px;top:794.69px;font-size:11px;line-height:11px;color:#000;">600.20</span>
<span class="t" style="left:1400.58px;top:794.69px;font-size:11px;line-height:11px;color:#000;">0,00</span>
<span class="t" style="left:1430.00px;top:794.69px;font-size:11px;line-height:11px;color:#000;">391.20</span>
<span class="t" style="left:1700.58px;top:794.69px;font-size:11px;line-height:11px;color:#000;">0,00</span>
<span class="t" style="left:1730.00px;top:794.69px;font-size:11px;line-height:11px;color:#000;">600.18</span>
<div style="position:absolute;left:46px;top:832px;width:1852px;height:1px;background:#a0a0a0"></div>
<div style="position:absolute;left:8px;top:832px;width:37px;height:1px;background:#a0a0a0"></div>
<span class="t" style="left:22.38px;top:816.69px;font-size:11px;line-height:11px;color:#000;">26</span>
<span class="t" style="left:48.00px;top:816.69px;font-size:11px;line-height:11px;color:#000;letter-spacing:-0.691px;">EARSIVFATURA</span>
<span class="t" style="left:148.00px;top:816.69px;font-size:11px;line-height:11px;color:#000;letter-spacing:-0.620px;">SATIS</span>
<span class="t" style="left:249.00px;top:816.69px;font-size:11px;line-height:11px;color:#0000ff;text-decoration:underline;">TRY2024000000...</span>
<span class="t" style="left:352.00px;top:816.69px;font-size:11px;line-height:11px;color:#000;">15.04.2024</span>
<span class="t" style="left:451.00px;top:816.69px;font-size:11px;line-height:11px;color:#000;letter-spacing:-0.509px;">ONUR HAYRİ US...</span>
<span class="t" style="left:628.00px;top:816.69px;font-size:11px;line-height:11px;color:#000;letter-spacing:-0.557px;">ONAYLANDI - S...</span>
<span class="t" style="left:788.34px;top:816.69px;font-size:11px;line-height:11px;color:#000;">703,96</span>
<span class="t" style="left:900.58px;top:816.69px;font-size:11px;line-height:11px;color:#000;">7,04</span>
<span class="t" style="left:989.17px;top:816.69px;font-size:11px;line-height:11px;color:#000;">711,00</span>
<span class="t" style="left:1200.58px;top:816.69px;font-size:11px;line-height:11px;color:#000;">0,00</span>
<span class="t" style="left:1230.00px;top:816.69px;font-size:11px;line-height:11px;color:#000;">600.20</span>
<span class="t" style="left:1400.58px;top:816.69px;font-size:11px;line-height:11px;color:#000;">0,00</span>
<span class="t" style="left:1430.00px;top:816.69px;font-size:11px;line-height:11px;color:#000;">391.20</span>
<span class="t" style="left:1700.58px;top:816.69px;font-size:11px;line-height:11px;color:#000;">0,00</span>
<span class="t" style="left:1730.00px;top:816.69px;font-size:11px;line-height:11px;color:#000;">600.18</span>
<div style="position:absolute;left:46px;top:854px;width:1852px;height:1px;background:#a0a0a0"></div>
<div style="position:absolute;left:8px;top:854px;width:37px;height:1px;background:#a0a0a0"></div>
<span class="t" style="left:22.38px;top:838.69px;font-size:11px;line-height:11px;color:#000;">27</span>
<span class="t" style="left:48.00px;top:838.69px;font-size:11px;line-height:11px;color:#000;letter-spacing:-0.691px;">EARSIVFATURA</span>
<span class="t" style="left:148.00px;top:838.69px;font-size:11px;line-height:11px;color:#000;letter-spacing:-0.620px;">SATIS</span>
<span class="t" style="left:249.00px;top:838.69px;font-size:11px;line-height:11px;color:#0000ff;text-decoration:underline;">TRY2024000000...</span>
<span class="t" style="left:352.00px;top:838.69px;font-size:11px;line-height:11px;color:#000;">15.04.2024</span>
<span class="t" style="left:451.00px;top:838.69px;font-size:11px;line-height:11px;color:#000;letter-spacing:-0.473px;">HIZIRELİ SOSYA...</span>
<span class="t" style="left:628.00px;top:838.69px;font-size:11px;line-height:11px;color:#000;letter-spacing:-0.557px;">ONAYLANDI - S...</span>
<span class="t" style="left:773.06px;top:838.69px;font-size:11px;line-height:11px;color:#000;">79.208,30</span>
<span class="t" style="left:888.34px;top:838.69px;font-size:11px;line-height:11px;color:#000;">792,08</span>
<span class="t" style="left:973.06px;top:838.69px;font-size:11px;line-height:11px;color:#000;">80.000,38</span>
<span class="t" style="left:1200.58px;top:838.69px;font-size:11px;line-height:11px;color:#000;">0,00</span>
<span class="t" style="left:1230.00px;top:838.69px;font-size:11px;line-height:11px;color:#000;">600.20</span>
<span class="t" style="left:1400.58px;top:838.69px;font-size:11px;line-height:11px;color:#000;">0,00</span>
<span class="t" style="left:1430.00px;top:838.69px;font-size:11px;line-height:11px;color:#000;">391.20</span>
<span class="t" style="left:1700.58px;top:838.69px;font-size:11px;line-height:11px;color:#000;">0,00</span>
<span class="t" style="left:1730.00px;top:838.69px;font-size:11px;line-height:11px;color:#000;">600.18</span>
<div style="position:absolute;left:46px;top:876px;width:1852px;height:1px;background:#a0a0a0"></div>
<div style="position:absolute;left:8px;top:876px;width:37px;height:1px;background:#a0a0a0"></div>
<span class="t" style="left:22.38px;top:860.69px;font-size:11px;line-height:11px;color:#000;">28</span>
<span class="t" style="left:48.00px;top:860.69px;font-size:11px;line-height:11px;color:#000;letter-spacing:-0.655px;">TICARIFATURA</span>
<span class="t" style="left:148.00px;top:860.69px;font-size:11px;line-height:11px;color:#000;letter-spacing:-0.620px;">SATIS</span>
<span class="t" style="left:249.00px;top:860.69px;font-size:11px;line-height:11px;color:#0000ff;text-decoration:underline;">TRN2024000000...</span>
<span class="t" style="left:352.00px;top:860.69px;font-size:11px;line-height:11px;color:#000;">16.04.2024</span>
<span class="t" style="left:451.00px;top:860.69px;font-size:11px;line-height:11px;color:#000;letter-spacing:-0.518px;">ALTINORDU MA...</span>
<span class="t" style="left:628.00px;top:860.69px;font-size:11px;line-height:11px;color:#000;letter-spacing:-0.557px;">ONAYLANDI - S...</span>
<span class="t" style="left:773.06px;top:860.69px;font-size:11px;line-height:11px;color:#000;">52.584,47</span>
<span class="t" style="left:888.34px;top:860.69px;font-size:11px;line-height:11px;color:#000;">652,21</span>
<span class="t" style="left:973.06px;top:860.69px;font-size:11px;line-height:11px;color:#000;">53.236,68</span>
<span class="t" style="left:1200.58px;top:860.69px;font-size:11px;line-height:11px;color:#000;">0,00</span>
<span class="t" style="left:1230.00px;top:860.69px;font-size:11px;line-height:11px;color:#000;">600.20</span>
<span class="t" style="left:1400.58px;top:860.69px;font-size:11px;line-height:11px;color:#000;">0,00</span>
<span class="t" style="left:1430.00px;top:860.69px;font-size:11px;line-height:11px;color:#000;">391.20</span>
<span class="t" style="left:1700.58px;top:860.69px;font-size:11px;line-height:11px;color:#000;">0,00</span>
<span class="t" style="left:1730.00px;top:860.69px;font-size:11px;line-height:11px;color:#000;">600.18</span>
<div style="position:absolute;left:46px;top:877px;width:1852px;height:21px;background:#ff4500"></div>
<div style="position:absolute;left:46px;top:898px;width:1852px;height:1px;background:#a0a0a0"></div>
<div style="position:absolute;left:8px;top:898px;width:37px;height:1px;background:#a0a0a0"></div>
<span class="t" style="left:22.38px;top:882.69px;font-size:11px;line-height:11px;color:#000;">29</span>
<span class="t" style="left:48.00px;top:882.69px;font-size:11px;line-height:11px;color:#000;letter-spacing:-0.721px;">TEMELFATURA</span>
<span class="t" style="left:148.00px;top:882.69px;font-size:11px;line-height:11px;color:#000;letter-spacing:-0.642px;">IADE</span>
<span class="t" style="left:249.00px;top:882.69px;font-size:11px;line-height:11px;color:#0000ff;text-decoration:underline;">TRN2024000000...</span>
<span class="t" style="left:352.00px;top:882.69px;font-size:11px;line-height:11px;color:#000;">16.04.2024</span>
<span class="t" style="left:451.00px;top:882.69px;font-size:11px;line-height:11px;color:#000;letter-spacing:-0.525px;">EKER SÜT ÜRÜN...</span>
<span class="t" style="left:628.00px;top:882.69px;font-size:11px;line-height:11px;color:#000;letter-spacing:-0.568px;">BEKLEMEDE - IA...</span>
<span class="t" style="left:779.17px;top:882.69px;font-size:11px;line-height:11px;color:#000;">1.701,42</span>
<span class="t" style="left:894.47px;top:882.69px;font-size:11px;line-height:11px;color:#000;">17,00</span>
<span class="t" style="left:979.17px;top:882.69px;font-size:11px;line-height:11px;color:#000;">1.718,42</span>
<span class="t" style="left:1200.58px;top:882.69px;font-size:11px;line-height:11px;color:#000;">0,00</span>
<span class="t" style="left:1230.00px;top:882.69px;font-size:11px;line-height:11px;color:#000;">153.20</span>
<span class="t" style="left:1400.58px;top:882.69px;font-size:11px;line-height:11px;color:#000;">0,00</span>
<span class="t" style="left:1430.00px;top:882.69px;font-size:11px;line-height:11px;color:#000;">391.20</span>
<span class="t" style="left:1700.58px;top:882.69px;font-size:11px;line-height:11px;color:#000;">0,00</span>
<span class="t" style="left:1730.00px;top:882.69px;font-size:11px;line-height:11px;color:#000;">153.18</span>
<div style="position:absolute;left:46px;top:920px;width:1852px;height:1px;background:#a0a0a0"></div>
<div style="position:absolute;left:8px;top:920px;width:37px;height:1px;background:#a0a0a0"></div>
<span class="t" style="left:22.38px;top:904.69px;font-size:11px;line-height:11px;color:#000;">30</span>
<span class="t" style="left:48.00px;top:904.69px;font-size:11px;line-height:11px;color:#000;letter-spacing:-0.721px;">TEMELFATURA</span>
<span class="t" style="left:148.00px;top:904.69px;font-size:11px;line-height:11px;color:#000;letter-spacing:-0.620px;">SATIS</span>
<span class="t" style="left:249.00px;top:904.69px;font-size:11px;line-height:11px;color:#0000ff;text-decoration:underline;">TRN2024000000...</span>
<span class="t" style="left:352.00px;top:904.69px;font-size:11px;line-height:11px;color:#000;">16.04.2024</span>
<span class="t" style="left:451.00px;top:904.69px;font-size:11px;line-height:11px;color:#000;letter-spacing:-0.490px;">KALE GIDA SAN...</span>
<span class="t" style="left:628.00px;top:904.69px;font-size:11px;line-height:11px;color:#000;letter-spacing:-0.593px;">BEKLEMEDE - SA...</span>
<span class="t" style="left:773.06px;top:904.69px;font-size:11px;line-height:11px;color:#000;">12.425,13</span>
<span class="t" style="left:879.17px;top:904.69px;font-size:11px;line-height:11px;color:#000;">2.485,03</span>
<span class="t" style="left:973.06px;top:904.69px;font-size:11px;line-height:11px;color:#000;">14.910,16</span>
<span class="t" style="left:1173.06px;top:904.69px;font-size:11px;line-height:11px;color:#000;">12.425,13</span>
<span class="t" style="left:1230.00px;top:904.69px;font-size:11px;line-height:11px;color:#000;">600.20</span>
<span class="t" style="left:1379.17px;top:904.69px;font-size:11px;line-height:11px;color:#000;">2.485,03</span>
<span class="t" style="left:1430.00px;top:904.69px;font-size:11px;line-height:11px;color:#000;">391.20</span>
<span class="t" style="left:1700.58px;top:904.69px;font-size:11px;line-height:11px;color:#000;">0,00</span>
<span class="t" style="left:1730.00px;top:904.69px;font-size:11px;line-height:11px;color:#000;">600.18</span>
<div style="position:absolute;left:46px;top:942px;width:1852px;height:1px;background:#a0a0a0"></div>
<div style="position:absolute;left:8px;top:942px;width:37px;height:1px;background:#a0a0a0"></div>
<span class="t" style="left:22.38px;top:926.69px;font-size:11px;line-height:11px;color:#000;">31</span>
<span class="t" style="left:48.00px;top:926.69px;font-size:11px;line-height:11px;color:#000;letter-spacing:-0.721px;">TEMELFATURA</span>
<span class="t" style="left:148.00px;top:926.69px;font-size:11px;line-height:11px;color:#000;letter-spacing:-0.620px;">SATIS</span>
<span class="t" style="left:249.00px;top:926.69px;font-size:11px;line-height:11px;color:#0000ff;text-decoration:underline;">TRN2024000000...</span>
<span class="t" style="left:352.00px;top:926.69px;font-size:11px;line-height:11px;color:#000;">16.04.2024</span>
<span class="t" style="left:451.00px;top:926.69px;font-size:11px;line-height:11px;color:#000;letter-spacing:-0.485px;">SERTELLİ İNŞAA...</span>
<span class="t" style="left:628.00px;top:926.69px;font-size:11px;line-height:11px;color:#000;letter-spacing:-0.593px;">BEKLEMEDE - SA...</span>
<span class="t" style="left:779.98px;top:926.69px;font-size:11px;line-height:11px;color:#000;">1.089,11</span>
<span class="t" style="left:894.47px;top:926.69px;font-size:11px;line-height:11px;color:#000;">10,89</span>
<span class="t" style="left:979.17px;top:926.69px;font-size:11px;line-height:11px;color:#000;">1.100,00</span>
<span class="t" style="left:1200.58px;top:926.69px;font-size:11px;line-height:11px;color:#000;">0,00</span>
<span class="t" style="left:1230.00px;top:926.69px;font-size:11px;line-height:11px;color:#000;">600.20</span>
<span class="t" style="left:1400.58px;top:926.69px;font-size:11px;line-height:11px;color:#000;">0,00</span>
<span class="t" style="left:1430.00px;top:926.69px;font-size:11px;line-height:11px;color:#000;">391.20</span>
<span class="t" style="left:1700.58px;top:926.69px;font-size:11px;line-height:11px;color:#000;">0,00</span>
<span class="t" style="left:1730.00px;top:926.69px;font-size:11px;line-height:11px;color:#000;">600.18</span>
<div style="position:absolute;left:46px;top:964px;width:1852px;height:1px;background:#a0a0a0"></div>
<div style="position:absolute;left:8px;top:964px;width:37px;height:1px;background:#a0a0a0"></div>
<span class="t" style="left:22.38px;top:948.69px;font-size:11px;line-height:11px;color:#000;">32</span>
<span class="t" style="left:48.00px;top:948.69px;font-size:11px;line-height:11px;color:#000;letter-spacing:-0.721px;">TEMELFATURA</span>
<span class="t" style="left:148.00px;top:948.69px;font-size:11px;line-height:11px;color:#000;letter-spacing:-0.620px;">SATIS</span>
<span class="t" style="left:249.00px;top:948.69px;font-size:11px;line-height:11px;color:#0000ff;text-decoration:underline;">TRN2024000000...</span>
<span class="t" style="left:352.00px;top:948.69px;font-size:11px;line-height:11px;color:#000;">16.04.2024</span>
<span class="t" style="left:451.00px;top:948.69px;font-size:11px;line-height:11px;color:#000;letter-spacing:-0.581px;">EMİNE ÇOLAK</span>
<span class="t" style="left:628.00px;top:948.69px;font-size:11px;line-height:11px;color:#000;letter-spacing:-0.593px;">BEKLEMEDE - SA...</span>
<span class="t" style="left:779.17px;top:948.69px;font-size:11px;line-height:11px;color:#000;">2.518,87</span>
<span class="t" style="left:894.47px;top:948.69px;font-size:11px;line-height:11px;color:#000;">25,19</span>
<span class="t" style="left:979.17px;top:948.69px;font-size:11px;line-height:11px;color:#000;">2.544,06</span>
<span class="t" style="left:1200.58px;top:948.69px;font-size:11px;line-height:11px;color:#000;">0,00</span>
<span class="t" style="left:1230.00px;top:948.69px;font-size:11px;line-height:11px;color:#000;">600.20</span>
<span class="t" style="left:1400.58px;top:948.69px;font-size:11px;line-height:11px;color:#000;">0,00</span>
<span class="t" style="left:1430.00px;top:948.69px;font-size:11px;line-height:11px;color:#000;">391.20</span>
<span class="t" style="left:1700.58px;top:948.69px;font-size:11px;line-height:11px;color:#000;">0,00</span>
<span class="t" style="left:1730.00px;top:948.69px;font-size:11px;line-height:11px;color:#000;">600.18</span>
<div style="position:absolute;left:145px;top:261px;width:1px;height:690px;background:#a0a0a0"></div>
<div style="position:absolute;left:245px;top:261px;width:1px;height:690px;background:#a0a0a0"></div>
<div style="position:absolute;left:348px;top:261px;width:1px;height:690px;background:#a0a0a0"></div>
<div style="position:absolute;left:448px;top:261px;width:1px;height:690px;background:#a0a0a0"></div>
<div style="position:absolute;left:548px;top:261px;width:1px;height:690px;background:#a0a0a0"></div>
<div style="position:absolute;left:625px;top:261px;width:1px;height:690px;background:#a0a0a0"></div>
<div style="position:absolute;left:726px;top:261px;width:1px;height:690px;background:#a0a0a0"></div>
<div style="position:absolute;left:826px;top:261px;width:1px;height:690px;background:#a0a0a0"></div>
<div style="position:absolute;left:926px;top:261px;width:1px;height:690px;background:#a0a0a0"></div>
<div style="position:absolute;left:1026px;top:261px;width:1px;height:690px;background:#a0a0a0"></div>
<div style="position:absolute;left:1126px;top:261px;width:1px;height:690px;background:#a0a0a0"></div>
<div style="position:absolute;left:1226px;top:261px;width:1px;height:690px;background:#a0a0a0"></div>
<div style="position:absolute;left:1326px;top:261px;width:1px;height:690px;background:#a0a0a0"></div>
<div style="position:absolute;left:1426px;top:261px;width:1px;height:690px;background:#a0a0a0"></div>
<div style="position:absolute;left:1526px;top:261px;width:1px;height:690px;background:#a0a0a0"></div>
<div style="position:absolute;left:1626px;top:261px;width:1px;height:690px;background:#a0a0a0"></div>
<div style="position:absolute;left:1726px;top:261px;width:1px;height:690px;background:#a0a0a0"></div>
<div style="position:absolute;left:1826px;top:261px;width:1px;height:690px;background:#a0a0a0"></div>
<div style="position:absolute;left:1926px;top:261px;width:1px;height:690px;background:#a0a0a0"></div>
<svg style="position:absolute;left:11px;top:267px;" width="6" height="10" viewBox="0 0 6 10"><path d="M0 0L5.5 4.5L0 9Z" fill="#404040"/></svg>
</div>
<div style="position:absolute;left:5px;top:951px;width:1893px;height:17px;background:#f0f0f0"></div>
<div style="position:absolute;left:22px;top:952px;width:735px;height:15px;background:#cdcdcd"></div>
<svg style="position:absolute;left:9px;top:955px;" width="8" height="10" viewBox="0 0 8 10"><path d="M6.2 1.5L2.6 5L6.2 8.5" fill="none" stroke="#606060" stroke-width="1.8"/></svg>
<svg style="position:absolute;left:1885px;top:955px;" width="8" height="10" viewBox="0 0 8 10"><path d="M1.8 1.5L5.4 5L1.8 8.5" fill="none" stroke="#606060" stroke-width="1.8"/></svg>
<div style="position:absolute;left:1898px;top:184px;width:17px;height:784px;background:#f0f0f0"></div>
<div style="position:absolute;left:1899px;top:201px;width:15px;height:306px;background:#cdcdcd"></div>
<svg style="position:absolute;left:1901px;top:190px;" width="10" height="7" viewBox="0 0 10 7"><path d="M1.5 5.5L5 2L8.5 5.5" fill="none" stroke="#606060" stroke-width="1.8"/></svg>
<svg style="position:absolute;left:1901px;top:939px;" width="10" height="7" viewBox="0 0 10 7"><path d="M1.5 1.5L5 5L8.5 1.5" fill="none" stroke="#606060" stroke-width="1.8"/></svg>
<div style="position:absolute;left:548px;top:183px;width:79px;height:770px;border:3px solid #12a83a;box-sizing:border-box"></div>
<div style="position:absolute;left:806px;top:102px;width:294px;height:95px;background:#fcfcfc;border:1px solid #a0a0a0;box-sizing:border-box;box-shadow:2px 2px 3px rgba(0,0,0,.3)"></div>
<div style="position:absolute;left:811px;top:106px;width:20px;height:88px;background:linear-gradient(90deg,#f0f0f0,#fafafa)"></div>
<div style="position:absolute;left:812px;top:130px;width:285px;height:21px;background:#b5d7f3;border-top:1px solid #3a8ad8;box-sizing:border-box"></div>
<span class="t" style="left:842.50px;top:112.84px;font-size:12px;line-height:12px;color:#000;letter-spacing:-0.292px;">Standard Eşleştirme</span>
<span class="t" style="left:842.50px;top:134.84px;font-size:12px;line-height:12px;color:#000;letter-spacing:-0.150px;">Akıllı Eşleştirme - İlk Kelimeye göre</span>
<span class="t" style="left:842.50px;top:156.84px;font-size:12px;line-height:12px;color:#000;letter-spacing:-0.199px;">Akıllı Eşleştirme - Gözardı Kelimelere göre</span>
<span class="t" style="left:842.50px;top:178.84px;font-size:12px;line-height:12px;color:#000;letter-spacing:-0.151px;">Tc No / Vergi No ile Eşleştirme</span>
<div style="position:absolute;left:811px;top:131px;width:288px;height:22px;border:3px solid #ffff00;box-sizing:border-box"></div>
<div style="position:absolute;left:808px;top:103px;width:294px;height:94px;border:3px solid #12a83a;box-sizing:border-box"></div>
<div style="position:absolute;left:710px;top:70px;width:124px;height:106px;border:3px solid #12a83a;box-sizing:border-box"></div>
<div style="position:absolute;left:805.0px;top:67.0px;width:33.0px;height:33.0px;border-radius:50%;box-sizing:border-box;border:3px solid #12a83a;background:#fff"></div>
<span class="t" style="left:816.77px;top:76.11px;font-size:17px;line-height:17px;color:#12a83a;font-weight:700;-webkit-text-stroke:0.7px #12a83a;">5</span>
<div style="position:absolute;left:1px;top:991px;width:1500px;height:1px;background:#dcdcdc"></div>
<div style="position:absolute;left:2px;top:994px;width:90px;height:18px;border-top:1px solid #a0a0a0;border-left:1px solid #a0a0a0;border-right:1px solid #fff;border-bottom:1px solid #fff;box-sizing:border-box;"></div>
<div style="position:absolute;left:93px;top:994px;width:72px;height:18px;border-top:1px solid #a0a0a0;border-left:1px solid #a0a0a0;border-right:1px solid #fff;border-bottom:1px solid #fff;box-sizing:border-box;background:#008000;"></div>
<div style="position:absolute;left:166px;top:994px;width:171px;height:18px;border-top:1px solid #a0a0a0;border-left:1px solid #a0a0a0;border-right:1px solid #fff;border-bottom:1px solid #fff;box-sizing:border-box;"></div>
<div style="position:absolute;left:339px;top:994px;width:125px;height:18px;border-top:1px solid #a0a0a0;border-left:1px solid #a0a0a0;border-right:1px solid #fff;border-bottom:1px solid #fff;box-sizing:border-box;"></div>
<div style="position:absolute;left:465px;top:994px;width:107px;height:18px;border-top:1px solid #a0a0a0;border-left:1px solid #a0a0a0;border-right:1px solid #fff;border-bottom:1px solid #fff;box-sizing:border-box;"></div>
<div style="position:absolute;left:573px;top:994px;width:151px;height:18px;border-top:1px solid #a0a0a0;border-left:1px solid #a0a0a0;border-right:1px solid #fff;border-bottom:1px solid #fff;box-sizing:border-box;"></div>
<div style="position:absolute;left:725px;top:994px;width:4px;height:18px;border-top:1px solid #a0a0a0;border-left:1px solid #a0a0a0;border-right:1px solid #fff;border-bottom:1px solid #fff;box-sizing:border-box;"></div>
<div style="position:absolute;left:730px;top:994px;width:2px;height:18px;border-top:1px solid #a0a0a0;border-left:1px solid #a0a0a0;border-right:1px solid #fff;border-bottom:1px solid #fff;box-sizing:border-box;"></div>
<span class="t" style="left:7.50px;top:997.84px;font-size:12px;line-height:12px;color:#000;letter-spacing:-0.553px;">Fatura Sayısı:74</span>
<span class="t" style="left:101.70px;top:997.84px;font-size:12px;line-height:12px;color:#f0fff0;letter-spacing:-0.456px;">Bakiye:0,00</span>
<span class="t" style="left:173.00px;top:997.84px;font-size:12px;line-height:12px;color:#000;letter-spacing:-0.318px;">Kdv Hariç Toplam:1.276.191,50</span>
<span class="t" style="left:346.70px;top:997.84px;font-size:12px;line-height:12px;color:#000;letter-spacing:-0.346px;">Toplam Kdv:57.915,47</span>
<span class="t" style="left:473.00px;top:997.84px;font-size:12px;line-height:12px;color:#000;letter-spacing:-0.284px;">Diğer Vergiler:0,00</span>
<span class="t" style="left:581.50px;top:997.84px;font-size:12px;line-height:12px;color:#000;letter-spacing:-0.409px;">Genel Toplam:1.334.106,97</span>
<div style="position:absolute;left:1px;top:1019px;width:46px;height:17px;border-top:1px solid #a0a0a0;border-left:1px solid #a0a0a0;border-right:1px solid #fff;border-bottom:1px solid #fff;box-sizing:border-box;"></div>
<div style="position:absolute;left:49px;top:1019px;width:95px;height:17px;border-top:1px solid #a0a0a0;border-left:1px solid #a0a0a0;border-right:1px solid #fff;border-bottom:1px solid #fff;box-sizing:border-box;"></div>
<span class="t" style="left:6.60px;top:1022.69px;font-size:11px;line-height:11px;color:#000;letter-spacing:-0.905px;">DEBUG</span>
<span class="t" style="left:54.40px;top:1022.69px;font-size:11px;line-height:11px;color:#000;letter-spacing:0.044px;">Versiyon : 5.1.0.0</span>
<div style="position:absolute;left:1664px;top:985px;width:128px;height:21px;background:#e1e1e1;border:1px solid #adadad;box-sizing:border-box"></div>
<div style="position:absolute;left:1667px;top:988px;width:122px;height:15px;background:#008000"></div>
<span class="t" style="left:1671.50px;top:989.84px;font-size:12px;line-height:12px;color:#fff;font-weight:700;letter-spacing:0.215px;">DIŞARI AKTAR - F2</span>
<div style="position:absolute;left:1800px;top:985px;width:115px;height:21px;background:#e1e1e1;border:1px solid #adadad;box-sizing:border-box"></div>
<div style="position:absolute;left:1803px;top:988px;width:109px;height:15px;background:#cd5c5c"></div>
<span class="t" style="left:1814.00px;top:989.84px;font-size:12px;line-height:12px;color:#fff;font-weight:700;letter-spacing:0.046px;">VAZGEÇ - ESC</span>
</body></html>
